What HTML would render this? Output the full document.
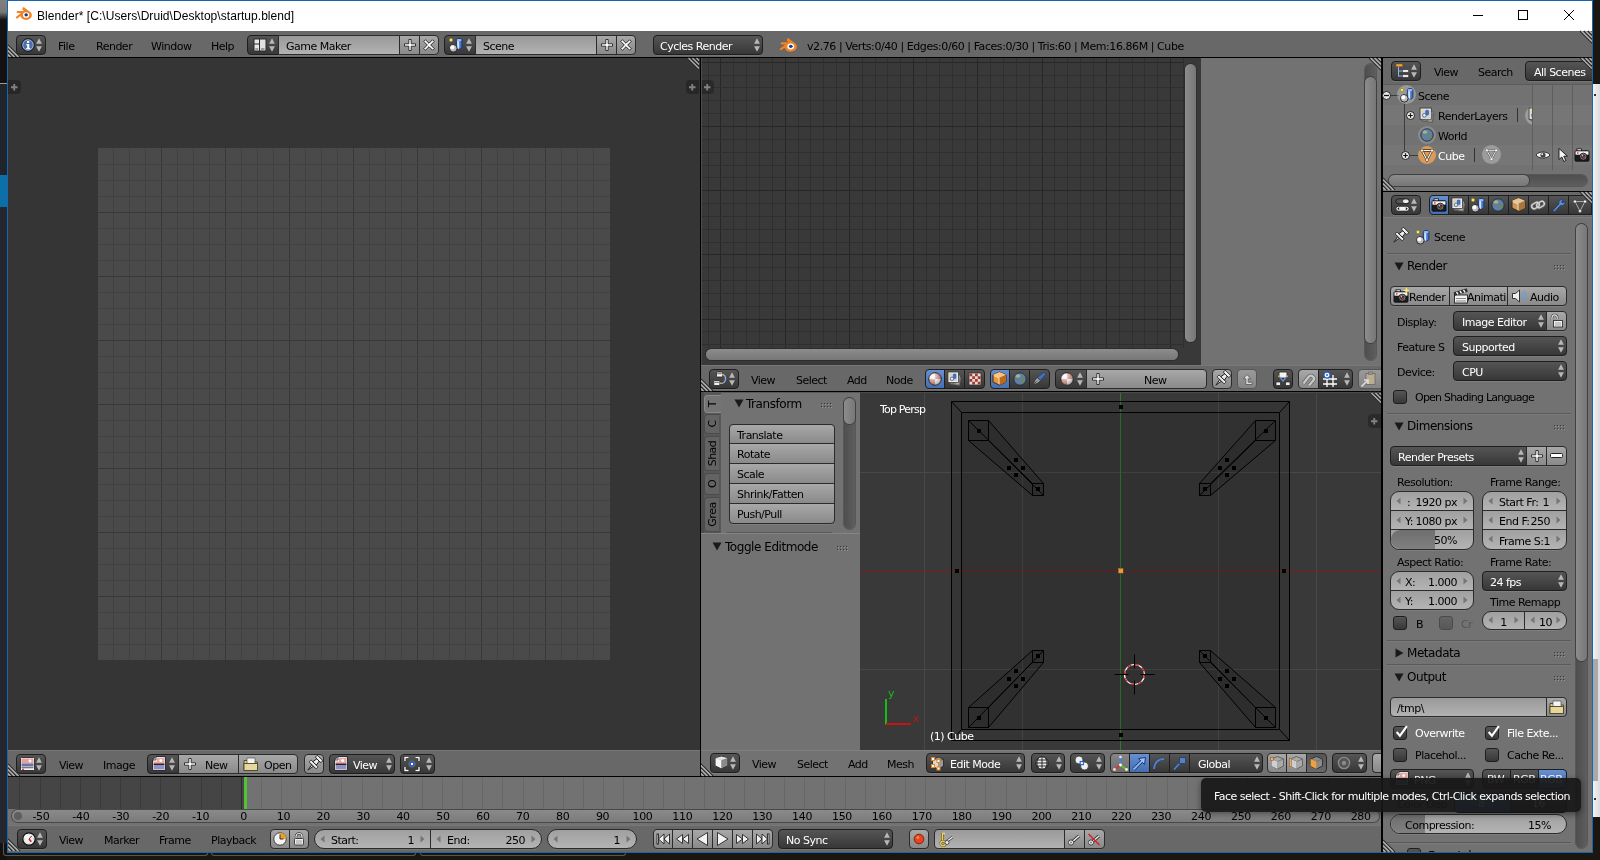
<!DOCTYPE html><html><head><meta charset="utf-8"><title>Blender</title><style>
*{box-sizing:border-box;margin:0;padding:0}
html,body{width:1600px;height:860px;overflow:hidden;background:#1a1610}
body{position:relative;font-family:"DejaVu Sans","Liberation Sans",sans-serif;font-size:11px;letter-spacing:-0.5px;color:#000;line-height:13px;white-space:nowrap}
.a{position:absolute}
.t{position:absolute;white-space:nowrap;line-height:13px;height:13px}
.w{color:#fff}
.pt{font-size:12px;letter-spacing:-0.45px;line-height:14px;height:14px}
.hd{position:absolute;background:#727272}
/* widgets */
.btn{position:absolute;border:1px solid #2b2b2b;background:linear-gradient(#a8a8a8,#8a8a8a);border-radius:4px}
.mnu{position:absolute;border:1px solid #1e1e1e;background:linear-gradient(#555,#373737);border-radius:4px;color:#fff}
.num{position:absolute;border:1px solid #2b2b2b;background:linear-gradient(#a0a0a0,#b4b4b4);border-radius:10px}
.txt{position:absolute;border:1px solid #2b2b2b;background:linear-gradient(#999,#b2b2b2);border-radius:4px}
.chk{position:absolute;border:1px solid #1e1e1e;background:linear-gradient(#555,#373737);border-radius:3px;width:14px;height:14px}
.rl{border-top-right-radius:0;border-bottom-right-radius:0}
.rr{border-top-left-radius:0;border-bottom-left-radius:0}
.rn{border-radius:0}
.rt{border-bottom-left-radius:0;border-bottom-right-radius:0}
.rb{border-top-left-radius:0;border-top-right-radius:0}
svg{position:absolute;overflow:visible}
</style></head><body><div class="a" style="left:0;top:0;width:1600px;height:860px;will-change:transform">
<div class="a" style="left:0px;top:0px;width:7px;height:84px;background:linear-gradient(#808080 0,#787878 12px,#141210 20px,#141210 100%);"></div>
<div class="a" style="left:0px;top:83px;width:7px;height:1px;background:#9a9a9a;"></div>
<div class="a" style="left:0px;top:84px;width:7px;height:91px;background:#20252b;"></div>
<div class="a" style="left:0px;top:175px;width:7px;height:32px;background:#0c6fa8;"></div>
<div class="a" style="left:0px;top:207px;width:7px;height:636px;background:#24282e;"></div>
<div class="a" style="left:0px;top:843px;width:7px;height:17px;background:#0c0c0c;"></div>
<div class="a" style="left:1593px;top:0px;width:7px;height:84px;background:#1a1712;"></div>
<div class="a" style="left:1593px;top:84px;width:7px;height:733px;background:linear-gradient(90deg,#f2f2f2,#dcdcdc);"></div>
<div class="a" style="left:1593px;top:659px;width:5px;height:122px;background:#a9a9a9;"></div>
<div class="a" style="left:1594px;top:94px;width:2px;height:2px;background:#333;"></div>
<div class="a" style="left:1594px;top:798px;width:2px;height:2px;background:#333;"></div>
<div class="a" style="left:1593px;top:817px;width:7px;height:43px;background:#1a1610;"></div>
<div class="a" style="left:7px;top:0px;width:1586px;height:853px;background:#727272;border:1px solid #1767b0"></div>
<div class="a" style="left:8px;top:1px;width:1584px;height:30px;background:#fff;"></div>
<div class="a" style="left:8px;top:31px;width:1584px;height:26px;background:#686868;"></div>
<div class="a" style="left:8px;top:57px;width:1584px;height:1px;background:#000;"></div>
<div class="a" style="left:8px;top:58px;width:692px;height:692px;background:#353535;"></div>
<div class="a" style="left:700px;top:58px;width:1px;height:720px;background:#000;"></div>
<div class="a" style="left:8px;top:750px;width:692px;height:26px;background:#686868;"></div>
<div class="a" style="left:701px;top:58px;width:482px;height:307px;background:#393939;"></div>
<div class="a" style="left:1183px;top:58px;width:18px;height:307px;background:#393939;"></div>
<div class="a" style="left:1201px;top:58px;width:180px;height:307px;background:#727272;"></div>
<div class="a" style="left:701px;top:365px;width:680px;height:26px;background:#686868;"></div>
<div class="a" style="left:701px;top:391px;width:680px;height:1px;background:#000;"></div>
<div class="a" style="left:701px;top:392px;width:159px;height:358px;background:#727272;"></div>
<div class="a" style="left:860px;top:392px;width:521px;height:358px;background:#393939;"></div>
<div class="a" style="left:701px;top:750px;width:680px;height:26px;background:#727272;"></div>
<div class="a" style="left:8px;top:776px;width:1373px;height:1px;background:#000;"></div>
<div class="a" style="left:8px;top:777px;width:1373px;height:48px;background:#727272;"></div>
<div class="a" style="left:8px;top:825px;width:1373px;height:27px;background:#686868;"></div>
<div class="a" style="left:1381px;top:58px;width:2px;height:794px;background:#000;"></div>
<div class="a" style="left:1383px;top:58px;width:209px;height:133px;background:#727272;"></div>
<div class="a" style="left:1383px;top:58px;width:209px;height:26px;background:#686868;"></div>
<div class="a" style="left:1383px;top:191px;width:209px;height:1px;background:#000;"></div>
<div class="a" style="left:1383px;top:192px;width:209px;height:660px;background:#727272;"></div>
<div class="a" style="left:1383px;top:192px;width:209px;height:26px;background:#686868;"></div>
<div class="a" style="left:1383px;top:217px;width:209px;height:1px;background:#7c7c7c;"></div>
<svg class="a" style="left:16px;top:7px" width="16" height="13.12" viewBox="0 0 32 26"><path d="M13.5 1.2c1-.9 2.600-.9 3.600 0l12 9.400c2.200 2 3 4.500 2.400 7.300-1 4.600-5.600 7.800-11.400 7.800-5.700 0-10.300-3.300-11.300-7.600l-5.400 4.100c-1.300 1-2.900.8-3.500-.2-.6-1 0-2.200 1-3l9.100-7H3.800c-1.500 0-2.500-.9-2.500-2 0-1.200 1-2.100 2.500-2.100h12.100l-2.400-2c-1.100-.9-1.100-2.100 0-3z" fill="#f5821f"/><ellipse cx="20.200" cy="15.800" rx="6.400" ry="5.600" fill="#fff"/><ellipse cx="20.400" cy="15.600" rx="3.500" ry="3.200" fill="#0b3d91"/></svg>
<div class="t" style="left:37px;top:9px;font:12px/14px 'Liberation Sans',sans-serif;letter-spacing:0.05px;height:14px;color:#000">Blender* [C:\Users\Druid\Desktop\startup.blend]</div>
<svg class="a" style="left:1460px;top:1px" width="132" height="30" viewBox="0 0 132 30" fill="none" stroke="#000" stroke-width="1"><path d="M13 14.500h10"/><rect x="58.500" y="9.500" width="9" height="9"/><path d="M104 9l10 10M114 9l-10 10"/></svg>
<div class="mnu " style="left:16px;top:35px;width:30px;height:20px;"></div>
<svg class="a" style="left:35px;top:38px" width="8" height="14" viewBox="0 0 8 14"><path d="M4 0.300 L6.900 5.700 L1.100 5.700 Z M1.100 8.300 L6.900 8.300 L4 13.700 Z" fill="#b8b8b8"/></svg>
<svg class="a" style="left:21px;top:38px" width="14" height="14" viewBox="0 0 14 14"><circle cx="7" cy="7" r="6.300" fill="#4a6ea6" stroke="#111" stroke-width="1"/><circle cx="7" cy="7" r="5.200" fill="none" stroke="#a9c0e6" stroke-width="0.8"/><path d="M6 3h2.200v2H6zM5.300 6h3v4h1v1.200H5.200V10h1V7.200h-.9z" fill="#fff"/></svg>
<div class="a" style="left:18px;top:55px;width:26px;height:1px;background:rgba(255,255,255,0.09);"></div>
<div class="t " style="left:58px;top:40px;">File</div>
<div class="t " style="left:96px;top:40px;">Render</div>
<div class="t " style="left:151px;top:40px;">Window</div>
<div class="t " style="left:211px;top:40px;">Help</div>
<svg class="a" style="left:8px;top:45px" width="12" height="12" viewBox="0 0 12 12"><g fill="none"><path d="M0 0 L12 12 M0 4 L8 12 M0 8 L4 12" stroke="#2c2c2c" stroke-width="1.3"/><path d="M0 1.5 L10.5 12 M0 5.5 L6.5 12 M0 9.5 L2.5 12" stroke="#b4b4b4" stroke-width="1.1"/></g></svg>
<div class="mnu rl" style="left:247px;top:35px;width:32px;height:20px;"></div>
<svg class="a" style="left:268px;top:38px" width="8" height="14" viewBox="0 0 8 14"><path d="M4 0.300 L6.900 5.700 L1.100 5.700 Z M1.100 8.300 L6.900 8.300 L4 13.700 Z" fill="#b8b8b8"/></svg>
<svg class="a" style="left:253px;top:38px" width="14" height="14" viewBox="0 0 14 14"><rect x=".5" y=".5" width="13" height="13" rx="1" fill="#2a2a2a"/><rect x="1.500" y="1.500" width="4.500" height="4" fill="#e8e8e8"/><rect x="1.500" y="6.500" width="4.500" height="6" fill="#e8e8e8"/><rect x="7" y="1.500" width="5.500" height="11" fill="#e0e0e0"/><rect x="2.200" y="10.500" width="3" height="1" fill="#555"/><rect x="8" y="10.500" width="3.500" height="1" fill="#555"/></svg>
<div class="btn rn" style="left:278px;top:35px;width:122px;height:20px;background:linear-gradient(#999,#b2b2b2)"><div class="t" style="left:7px;top:4px">Game Maker</div></div>
<div class="btn rn" style="left:399px;top:35px;width:21px;height:20px;"><svg class="a" style="left:2.5px;top:2px" width="14" height="14" viewBox="0 0 14 14"><path d="M5.800 1.500h2.400v4.300h4.300v2.400H8.200v4.300H5.800V8.200H1.500V5.800h4.300z" fill="#fff" stroke="#222" stroke-width=".9"/></svg></div>
<div class="btn rr" style="left:419px;top:35px;width:20px;height:20px;"><svg class="a" style="left:2px;top:2px" width="14" height="14" viewBox="0 0 14 14"><path d="M5.800 .8h2.400v5h5v2.400h-5v5H5.800v-5h-5V5.800h5z" transform="rotate(45 7 7)" fill="#fff" stroke="#222" stroke-width=".9"/></svg></div>
<div class="a" style="left:250px;top:55px;width:186px;height:1px;background:rgba(255,255,255,0.09);"></div>
<div class="mnu rl" style="left:444px;top:35px;width:32px;height:20px;"></div>
<svg class="a" style="left:465px;top:38px" width="8" height="14" viewBox="0 0 8 14"><path d="M4 0.300 L6.900 5.700 L1.100 5.700 Z M1.100 8.300 L6.900 8.300 L4 13.700 Z" fill="#b8b8b8"/></svg>
<svg class="a" style="left:448px;top:37px" width="16" height="16" viewBox="0 0 16 16"><path d="M8.300 3.200c0-2.300 5.600-2.300 5.600 0v7c0 2.300-5.600 2.300-5.600 0z" fill="#3f78d4" stroke="#1a2f5a" stroke-width=".8"/><path d="M9.200 3.600c.5.500 1.300.7 2 .7v7.800c-.8 0-1.500-.3-2-.8z" fill="#d5e4fb"/><ellipse cx="11.100" cy="3.100" rx="2.500" ry="1.100" fill="#9fc0f2"/><circle cx="5.300" cy="11.300" r="3.800" fill="#bdbdbd" stroke="#222" stroke-width=".9"/><circle cx="4.300" cy="10.200" r="2" fill="#fff"/><circle cx="3" cy="3" r="1.700" fill="#f6ea6e" stroke="#8d8420" stroke-width=".7"/></svg>
<div class="btn rn" style="left:475px;top:35px;width:122px;height:20px;background:linear-gradient(#999,#b2b2b2)"><div class="t" style="left:7px;top:4px">Scene</div></div>
<div class="btn rn" style="left:596px;top:35px;width:21px;height:20px;"><svg class="a" style="left:2.5px;top:2px" width="14" height="14" viewBox="0 0 14 14"><path d="M5.800 1.500h2.400v4.300h4.300v2.400H8.200v4.300H5.800V8.200H1.500V5.800h4.300z" fill="#fff" stroke="#222" stroke-width=".9"/></svg></div>
<div class="btn rr" style="left:616px;top:35px;width:20px;height:20px;"><svg class="a" style="left:2px;top:2px" width="14" height="14" viewBox="0 0 14 14"><path d="M5.800 .8h2.400v5h5v2.400h-5v5H5.800v-5h-5V5.800h5z" transform="rotate(45 7 7)" fill="#fff" stroke="#222" stroke-width=".9"/></svg></div>
<div class="a" style="left:447px;top:55px;width:186px;height:1px;background:rgba(255,255,255,0.09);"></div>
<div class="mnu " style="left:653px;top:35px;width:110px;height:20px;"><div class="t w" style="left:6px;top:4px">Cycles Render</div><svg class="a" style="left:98.5px;top:2.0px" width="8" height="14" viewBox="0 0 8 14"><path d="M4 0.300 L6.900 5.700 L1.100 5.700 Z M1.100 8.300 L6.900 8.300 L4 13.700 Z" fill="#b8b8b8"/></svg></div>
<div class="a" style="left:656px;top:55px;width:104px;height:1px;background:rgba(255,255,255,0.09);"></div>
<svg class="a" style="left:780px;top:38px" width="17" height="13.94" viewBox="0 0 32 26"><path d="M13.5 1.2c1-.9 2.600-.9 3.600 0l12 9.400c2.200 2 3 4.500 2.400 7.300-1 4.600-5.600 7.800-11.400 7.800-5.700 0-10.300-3.300-11.300-7.600l-5.400 4.100c-1.300 1-2.900.8-3.500-.2-.6-1 0-2.200 1-3l9.100-7H3.800c-1.500 0-2.500-.9-2.500-2 0-1.200 1-2.100 2.500-2.100h12.100l-2.400-2c-1.100-.9-1.100-2.100 0-3z" fill="#f5821f"/><ellipse cx="20.200" cy="15.800" rx="6.400" ry="5.600" fill="#fff"/><ellipse cx="20.400" cy="15.600" rx="3.500" ry="3.200" fill="#0b3d91"/></svg>
<div class="t " style="left:807px;top:40px;letter-spacing:-0.43px">v2.76 | Verts:0/40 | Edges:0/60 | Faces:0/30 | Tris:60 | Mem:16.86M | Cube</div>
<svg class="a" style="left:1580px;top:31px" width="12" height="12" viewBox="0 0 12 12"><g fill="none"><path d="M0 0 L12 12 M4 0 L12 8 M8 0 L12 4" stroke="#2c2c2c" stroke-width="1.3"/><path d="M1.5 0 L12 10.5 M5.5 0 L12 6.5 M9.5 0 L12 2.5" stroke="#b4b4b4" stroke-width="1.1"/></g></svg>
<div class="a" style="left:98px;top:148px;width:512px;height:512px;background-color:#4a4a4a;background-image:linear-gradient(90deg,transparent 63px,#383838 63px),linear-gradient(90deg,transparent 15px,#414141 15px);background-size:64px 64px,16px 16px"></div>
<div class="a" style="left:609px;top:148px;width:1px;height:512px;background:#4a4a4a;"></div>
<div class="a" style="left:98px;top:149px;width:512px;height:511px;background-image:linear-gradient(transparent 63px,#383838 63px),linear-gradient(transparent 15px,#414141 15px);background-size:64px 64px,16px 16px"></div>
<div class="a" style="left:8px;top:80px;width:13px;height:14px;background:rgba(0,0,0,.25);border-radius:0 4px 4px 0"><svg class="a" style="left:3px;top:4px" width="6.500" height="6.500" viewBox="0 0 7 7"><path d="M2.500 0h2v2.500H7v2H4.500V7h-2V4.500H0v-2h2.500z" fill="#828282"/></svg></div>
<div class="a" style="left:686px;top:80px;width:13px;height:14px;background:rgba(0,0,0,.25);border-radius:4px 0 0 4px"><svg class="a" style="left:3px;top:4px" width="6.500" height="6.500" viewBox="0 0 7 7"><path d="M2.500 0h2v2.500H7v2H4.500V7h-2V4.500H0v-2h2.500z" fill="#828282"/></svg></div>
<svg class="a" style="left:687px;top:58px" width="12" height="12" viewBox="0 0 12 12"><g fill="none"><path d="M0 0 L12 12 M4 0 L12 8 M8 0 L12 4" stroke="#2c2c2c" stroke-width="1.3"/><path d="M1.5 0 L12 10.5 M5.5 0 L12 6.5 M9.5 0 L12 2.5" stroke="#b4b4b4" stroke-width="1.1"/></g></svg>
<div class="mnu " style="left:16px;top:754px;width:30px;height:20px;"></div>
<svg class="a" style="left:35px;top:757px" width="8" height="14" viewBox="0 0 8 14"><path d="M4 0.300 L6.900 5.700 L1.100 5.700 Z M1.100 8.300 L6.900 8.300 L4 13.700 Z" fill="#b8b8b8"/></svg>
<svg class="a" style="left:20px;top:757px" width="15" height="14" viewBox="0 0 15 14"><rect x=".5" y=".5" width="14" height="13" rx="1" fill="#f4f4f4" stroke="#2a2a2a" stroke-width=".9"/><rect x="1.500" y="1.500" width="12" height="5" fill="#e8a09c"/><rect x="1.500" y="6.500" width="12" height="3" fill="#6d72ab"/><circle cx="10" cy="4" r="1.400" fill="#fff"/><rect x="1.500" y="10.300" width="12" height=".9" fill="#444"/><rect x="2" y="11.800" width="2" height="1" fill="#d22"/></svg>
<div class="a" style="left:18px;top:774px;width:26px;height:1px;background:rgba(255,255,255,0.09);"></div>
<div class="t " style="left:59px;top:759px;">View</div>
<div class="t " style="left:103px;top:759px;">Image</div>
<div class="mnu rl" style="left:147px;top:754px;width:32px;height:20px;"></div>
<svg class="a" style="left:168px;top:757px" width="8" height="14" viewBox="0 0 8 14"><path d="M4 0.300 L6.900 5.700 L1.100 5.700 Z M1.100 8.300 L6.900 8.300 L4 13.700 Z" fill="#b8b8b8"/></svg>
<svg class="a" style="left:152px;top:756px" width="14.0" height="15" viewBox="0 0 14 15"><path d="M4 .6h9.400v13.800H.6V4z" fill="#f6f6f6" stroke="#222" stroke-width="1"/><path d="M5 2h7.300v6H1.700V5.500H5z" fill="#eaa6a2"/><rect x="1.700" y="8" width="10.600" height="5.300" fill="#8f90c6"/><rect x="1.700" y="7.600" width="10.600" height="1.300" fill="#1a1a1a"/><circle cx="8.700" cy="4.600" r="1.500" fill="#fff"/><path d="M.6 4L4 .6V4z" fill="#ddd" stroke="#222" stroke-width=".7"/></svg>
<div class="btn rn" style="left:178px;top:754px;width:61px;height:20px;"><div class="t" style="left:26px;top:4px">New</div><svg class="a" style="left:4px;top:2px" width="14" height="14" viewBox="0 0 14 14"><path d="M5.800 1.500h2.400v4.300h4.300v2.400H8.200v4.300H5.800V8.200H1.500V5.800h4.300z" fill="#fff" stroke="#222" stroke-width=".9"/></svg></div>
<div class="btn rr" style="left:238px;top:754px;width:60px;height:20px;"><div class="t" style="left:25px;top:4px">Open</div><svg class="a" style="left:4px;top:2px" width="16" height="14" viewBox="0 0 16 14"><path d="M1 3.500h5l1 1.500h7.500v8.500H1z" fill="#d9c98a" stroke="#4a4223" stroke-width=".9"/><path d="M4 1h8v6H4z" fill="#f4f4f4" stroke="#555" stroke-width=".7"/><path d="M1 6.500h13.500v7H1z" fill="#e6d89c" stroke="#4a4223" stroke-width=".9"/></svg></div>
<div class="a" style="left:151px;top:774px;width:144px;height:1px;background:rgba(255,255,255,0.09);"></div>
<div class="btn " style="left:304px;top:754px;width:20px;height:20px;"><svg class="a" style="left:1px;top:1px" width="16" height="16" viewBox="0 0 16 16"><g transform="translate(0.600 -0.600) rotate(45 8 8)" fill="#ececec" stroke="#1c1c1c" stroke-width=".9" stroke-linejoin="round"><path d="M8 17.500L6.800 10.500h2.400z" fill="#d8d8d8"/><rect x="3" y="8" width="10" height="2.800" rx=".8"/><path d="M5.600 8L6.300 3h3.400l.7 5z"/><rect x="4" y=".2" width="8" height="3" rx="1.100"/></g></svg></div>
<div class="a" style="left:306px;top:774px;width:16px;height:1px;background:rgba(255,255,255,0.09);"></div>
<div class="mnu " style="left:329px;top:754px;width:66px;height:20px;"><div class="t w" style="left:23px;top:4px">View</div><svg class="a" style="left:54.5px;top:2.0px" width="8" height="14" viewBox="0 0 8 14"><path d="M4 0.300 L6.900 5.700 L1.100 5.700 Z M1.100 8.300 L6.900 8.300 L4 13.700 Z" fill="#b8b8b8"/></svg></div>
<svg class="a" style="left:334px;top:756px" width="14.0" height="15" viewBox="0 0 14 15"><path d="M4 .6h9.400v13.800H.6V4z" fill="#f6f6f6" stroke="#222" stroke-width="1"/><path d="M5 2h7.300v6H1.700V5.500H5z" fill="#eaa6a2"/><rect x="1.700" y="8" width="10.600" height="5.300" fill="#8f90c6"/><rect x="1.700" y="7.600" width="10.600" height="1.300" fill="#1a1a1a"/><circle cx="8.700" cy="4.600" r="1.500" fill="#fff"/><path d="M.6 4L4 .6V4z" fill="#ddd" stroke="#222" stroke-width=".7"/></svg>
<div class="a" style="left:332px;top:774px;width:60px;height:1px;background:rgba(255,255,255,0.09);"></div>
<div class="mnu " style="left:400px;top:754px;width:35px;height:20px;"><svg class="a" style="left:23.5px;top:2.0px" width="8" height="14" viewBox="0 0 8 14"><path d="M4 0.300 L6.900 5.700 L1.100 5.700 Z M1.100 8.300 L6.900 8.300 L4 13.700 Z" fill="#b8b8b8"/></svg></div>
<svg class="a" style="left:404px;top:756px" width="16" height="16" viewBox="0 0 16 16" fill="none"><path d="M1 5V1.500h3.500M11.500 1.500H15V5M15 11v3.500h-3.500M4.500 14.500H1V11" stroke="#111" stroke-width="2.600"/><path d="M1 5V1.500h3.500M11.500 1.500H15V5M15 11v3.500h-3.500M4.500 14.500H1V11" stroke="#fff" stroke-width="1.400"/><circle cx="8" cy="8" r="3.600" fill="#6a6a6a"/><rect x="6.300" y="6.300" width="3.400" height="3.400" fill="#fff" stroke="#2058d0" stroke-width="1.300"/></svg>
<div class="a" style="left:404px;top:774px;width:28px;height:1px;background:rgba(255,255,255,0.09);"></div>
<svg class="a" style="left:8px;top:764px" width="12" height="12" viewBox="0 0 12 12"><g fill="none"><path d="M0 0 L12 12 M0 4 L8 12 M0 8 L4 12" stroke="#2c2c2c" stroke-width="1.3"/><path d="M0 1.5 L10.5 12 M0 5.5 L6.5 12 M0 9.5 L2.5 12" stroke="#b4b4b4" stroke-width="1.1"/></g></svg>
<div class="a" style="left:8px;top:750px;width:692px;height:1px;background:rgba(255,255,255,0.10);"></div>
<svg class="a" style="left:701px;top:58px" width="483" height="307" viewBox="0 0 483 307" shape-rendering="crispEdges"><rect x="7" y="0" width="1" height="307" fill="#2f2f2f"/><rect x="19" y="0" width="1" height="307" fill="#272727"/><rect x="32" y="0" width="1" height="307" fill="#2f2f2f"/><rect x="45" y="0" width="1" height="307" fill="#2f2f2f"/><rect x="58" y="0" width="1" height="307" fill="#2f2f2f"/><rect x="71" y="0" width="1" height="307" fill="#2f2f2f"/><rect x="84" y="0" width="1" height="307" fill="#272727"/><rect x="97" y="0" width="1" height="307" fill="#2f2f2f"/><rect x="109" y="0" width="1" height="307" fill="#2f2f2f"/><rect x="122" y="0" width="1" height="307" fill="#2f2f2f"/><rect x="135" y="0" width="1" height="307" fill="#2f2f2f"/><rect x="148" y="0" width="1" height="307" fill="#272727"/><rect x="161" y="0" width="1" height="307" fill="#2f2f2f"/><rect x="174" y="0" width="1" height="307" fill="#2f2f2f"/><rect x="186" y="0" width="1" height="307" fill="#2f2f2f"/><rect x="199" y="0" width="1" height="307" fill="#2f2f2f"/><rect x="212" y="0" width="1" height="307" fill="#272727"/><rect x="225" y="0" width="1" height="307" fill="#2f2f2f"/><rect x="238" y="0" width="1" height="307" fill="#2f2f2f"/><rect x="251" y="0" width="1" height="307" fill="#2f2f2f"/><rect x="264" y="0" width="1" height="307" fill="#2f2f2f"/><rect x="276" y="0" width="1" height="307" fill="#272727"/><rect x="289" y="0" width="1" height="307" fill="#2f2f2f"/><rect x="302" y="0" width="1" height="307" fill="#2f2f2f"/><rect x="315" y="0" width="1" height="307" fill="#2f2f2f"/><rect x="328" y="0" width="1" height="307" fill="#2f2f2f"/><rect x="341" y="0" width="1" height="307" fill="#272727"/><rect x="353" y="0" width="1" height="307" fill="#2f2f2f"/><rect x="366" y="0" width="1" height="307" fill="#2f2f2f"/><rect x="379" y="0" width="1" height="307" fill="#2f2f2f"/><rect x="392" y="0" width="1" height="307" fill="#2f2f2f"/><rect x="405" y="0" width="1" height="307" fill="#272727"/><rect x="418" y="0" width="1" height="307" fill="#2f2f2f"/><rect x="431" y="0" width="1" height="307" fill="#2f2f2f"/><rect x="443" y="0" width="1" height="307" fill="#2f2f2f"/><rect x="456" y="0" width="1" height="307" fill="#2f2f2f"/><rect x="469" y="0" width="1" height="307" fill="#272727"/><rect x="482" y="0" width="1" height="307" fill="#2f2f2f"/><rect x="0" y="4" width="483" height="1" fill="#272727"/><rect x="0" y="17" width="483" height="1" fill="#2f2f2f"/><rect x="0" y="29" width="483" height="1" fill="#2f2f2f"/><rect x="0" y="42" width="483" height="1" fill="#2f2f2f"/><rect x="0" y="55" width="483" height="1" fill="#2f2f2f"/><rect x="0" y="68" width="483" height="1" fill="#272727"/><rect x="0" y="81" width="483" height="1" fill="#2f2f2f"/><rect x="0" y="94" width="483" height="1" fill="#2f2f2f"/><rect x="0" y="107" width="483" height="1" fill="#2f2f2f"/><rect x="0" y="119" width="483" height="1" fill="#2f2f2f"/><rect x="0" y="132" width="483" height="1" fill="#272727"/><rect x="0" y="145" width="483" height="1" fill="#2f2f2f"/><rect x="0" y="158" width="483" height="1" fill="#2f2f2f"/><rect x="0" y="171" width="483" height="1" fill="#2f2f2f"/><rect x="0" y="184" width="483" height="1" fill="#2f2f2f"/><rect x="0" y="196" width="483" height="1" fill="#272727"/><rect x="0" y="209" width="483" height="1" fill="#2f2f2f"/><rect x="0" y="222" width="483" height="1" fill="#2f2f2f"/><rect x="0" y="235" width="483" height="1" fill="#2f2f2f"/><rect x="0" y="248" width="483" height="1" fill="#2f2f2f"/><rect x="0" y="261" width="483" height="1" fill="#272727"/><rect x="0" y="273" width="483" height="1" fill="#2f2f2f"/><rect x="0" y="286" width="483" height="1" fill="#2f2f2f"/><rect x="0" y="299" width="483" height="1" fill="#2f2f2f"/></svg>
<div class="a" style="left:1184px;top:58px;width:17px;height:307px;background:#393939;"></div>
<div class="a" style="left:701px;top:348px;width:500px;height:17px;background:#393939;"></div>
<div class="a" style="left:701px;top:80px;width:13px;height:14px;background:rgba(0,0,0,.25);border-radius:0 4px 4px 0"><svg class="a" style="left:3px;top:4px" width="6.500" height="6.500" viewBox="0 0 7 7"><path d="M2.500 0h2v2.500H7v2H4.500V7h-2V4.500H0v-2h2.500z" fill="#828282"/></svg></div>
<div class="a" style="left:701px;top:58px;width:1px;height:307px;background:#4c4c4c;"></div>
<div class="a" style="left:1185px;top:64px;width:11px;height:278px;border-radius:5.5px;background:linear-gradient(90deg,#4e4e4e,#5e5e5e);box-shadow:0 0 0 1px rgba(40,40,40,.35)"></div>
<div class="a" style="left:1185px;top:64px;width:11px;height:278px;border-radius:5.5px;background:linear-gradient(90deg,#8c8c8c,#777);box-shadow:0 0 0 1px rgba(40,40,40,.5)"></div>
<div class="a" style="left:706px;top:349px;width:472px;height:11px;border-radius:5.5px;background:linear-gradient(#4e4e4e,#5e5e5e);box-shadow:0 0 0 1px rgba(40,40,40,.35)"></div>
<div class="a" style="left:706px;top:349px;width:472px;height:11px;border-radius:5.5px;background:linear-gradient(#8c8c8c,#777);box-shadow:0 0 0 1px rgba(40,40,40,.5)"></div>
<div class="a" style="left:1365px;top:64px;width:11px;height:296px;border-radius:5.5px;background:linear-gradient(90deg,#4e4e4e,#5e5e5e);box-shadow:0 0 0 1px rgba(40,40,40,.35)"></div>
<div class="a" style="left:1365px;top:77px;width:11px;height:266px;border-radius:5.5px;background:linear-gradient(90deg,#8c8c8c,#777);box-shadow:0 0 0 1px rgba(40,40,40,.5)"></div>
<svg class="a" style="left:1369px;top:58px" width="12" height="12" viewBox="0 0 12 12"><g fill="none"><path d="M0 0 L12 12 M4 0 L12 8 M8 0 L12 4" stroke="#2c2c2c" stroke-width="1.3"/><path d="M1.5 0 L12 10.5 M5.5 0 L12 6.5 M9.5 0 L12 2.5" stroke="#b4b4b4" stroke-width="1.1"/></g></svg>
<div class="a" style="left:702px;top:365px;width:679px;height:1px;background:rgba(255,255,255,0.10);"></div>
<div class="mnu " style="left:709px;top:369px;width:30px;height:20px;"></div>
<svg class="a" style="left:728px;top:372px" width="8" height="14" viewBox="0 0 8 14"><path d="M4 0.300 L6.900 5.700 L1.100 5.700 Z M1.100 8.300 L6.900 8.300 L4 13.700 Z" fill="#b8b8b8"/></svg>
<svg class="a" style="left:713px;top:371px" width="16" height="16" viewBox="0 0 16 16"><path d="M9 3.500c5 0 5 9-1.500 9" fill="none" stroke="#8fb3ee" stroke-width="1.300"/><rect x="3.500" y="1" width="6" height="5" rx=".8" fill="#f2f2f2" stroke="#222" stroke-width=".8"/><rect x="4.300" y="2.300" width="4.400" height=".9" fill="#555"/><rect x=".8" y="9.500" width="6" height="5" rx=".8" fill="#f2f2f2" stroke="#222" stroke-width=".8"/><rect x="1.600" y="10.800" width="4.400" height=".9" fill="#555"/><rect x="9" y="2.800" width="1.600" height="1.600" fill="#f0a020"/><rect x="6.500" y="11.400" width="1.600" height="1.600" fill="#f0a020"/></svg>
<div class="a" style="left:711px;top:389px;width:26px;height:1px;background:rgba(255,255,255,0.09);"></div>
<div class="t " style="left:751px;top:374px;">View</div>
<div class="t " style="left:796px;top:374px;">Select</div>
<div class="t " style="left:847px;top:374px;">Add</div>
<div class="t " style="left:886px;top:374px;">Node</div>
<div class="mnu rl" style="left:925px;top:369px;width:20px;height:20px;background:linear-gradient(#6690d2,#466eb2)"><svg class="a" style="left:2px;top:2px" width="14" height="14" viewBox="0 0 14 14"><defs><radialGradient id="mg" cx=".35" cy=".3" r=".8"><stop offset="0" stop-color="#fff" stop-opacity=".95"/><stop offset=".45" stop-color="#fff" stop-opacity=".25"/><stop offset="1" stop-color="#000" stop-opacity=".35"/></radialGradient></defs><circle cx="7" cy="7" r="6.300" fill="#e4e0e0"/><path d="M7 7V.7A6.300 6.300 0 0 1 13.300 7z" fill="#c47f74"/><path d="M7 7v6.300A6.300 6.300 0 0 1 .7 7z" fill="#c47f74"/><circle cx="7" cy="7" r="6.300" fill="url(#mg)"/><circle cx="7" cy="7" r="6.300" fill="none" stroke="#1a1a1a" stroke-width=".9"/></svg></div>
<div class="mnu rn" style="left:944px;top:369px;width:21px;height:20px;background:linear-gradient(#555,#373737)"><svg class="a" style="left:2px;top:1px" width="15" height="15" viewBox="0 0 15 15"><path d="M4 5l10 1.500-1.500 8L3 13z" fill="#d8d2b4" stroke="#444" stroke-width=".7"/><path d="M3 3.500l10 .8-.8 9L2.200 12z" fill="#e8e4d0" stroke="#444" stroke-width=".7"/><rect x="1" y="1" width="10.500" height="10.500" fill="#f6f6f6" stroke="#333" stroke-width=".8"/><rect x="2.200" y="2.200" width="8.100" height="8.100" fill="#c9d3e6"/><rect x="6.300" y="3" width="2.600" height="4.600" rx="1" fill="#3f76cf" stroke="#1d3f7a" stroke-width=".5"/><circle cx="5" cy="7.800" r="1.700" fill="#eee" stroke="#333" stroke-width=".6"/><circle cx="3.300" cy="3.300" r="1" fill="#f1de52"/></svg></div>
<div class="mnu rr" style="left:964px;top:369px;width:21px;height:20px;background:linear-gradient(#555,#373737)"><svg class="a" style="left:3px;top:2px" width="14" height="14" viewBox="0 0 14 14"><rect x="1" y="1" width="12" height="12" fill="#e6dcd6" stroke="#333" stroke-width=".8"/><rect x="1.5" y="1.5" width="2.750" height="2.750" fill="#a23a32"/><rect x="1.5" y="7.0" width="2.750" height="2.750" fill="#a23a32"/><rect x="4.25" y="4.25" width="2.750" height="2.750" fill="#a23a32"/><rect x="4.25" y="9.75" width="2.750" height="2.750" fill="#a23a32"/><rect x="7.0" y="1.5" width="2.750" height="2.750" fill="#a23a32"/><rect x="7.0" y="7.0" width="2.750" height="2.750" fill="#a23a32"/><rect x="9.75" y="4.25" width="2.750" height="2.750" fill="#a23a32"/><rect x="9.75" y="9.75" width="2.750" height="2.750" fill="#a23a32"/></svg></div>
<div class="a" style="left:928px;top:389px;width:54px;height:1px;background:rgba(255,255,255,0.09);"></div>
<div class="mnu rl" style="left:990px;top:369px;width:20px;height:20px;background:linear-gradient(#6690d2,#466eb2)"><svg class="a" style="left:1px;top:1px" width="15" height="15" viewBox="0 0 15 15"><path d="M7.500 1L14 3.800V11L7.500 14.200 1 11V3.800z" fill="#e8943a" stroke="#3a2408" stroke-width=".9"/><path d="M7.500 1L14 3.800 7.500 6.800 1 3.800z" fill="#f7c67e"/><path d="M7.500 6.800L14 3.800V11L7.500 14.200z" fill="#b96a1c"/><path d="M1.800 4.600L7 7v6.200" fill="none" stroke="#fff" stroke-width=".8" opacity=".8"/></svg></div>
<div class="mnu rn" style="left:1009px;top:369px;width:21px;height:20px;background:linear-gradient(#555,#373737)"><svg class="a" style="left:3px;top:2px" width="14" height="14" viewBox="0 0 14 14"><circle cx="7" cy="7" r="6.200" fill="#5f7fa6" stroke="#1c2a3c" stroke-width=".9"/><path d="M3 3.500c1.500-1 3-.8 3.800.2.600 1-.3 1.800-1.200 2.300-.8.600-.5 1.800-1.600 1.700C2.800 7.500 2 5 3 3.500zM8 6.500c1.200-.6 3-.4 3.600.8.500 1.200-.5 3-1.700 3.700-1 .4-1.400-.9-1.600-1.900-.2-1-1.200-2-.3-2.600zM7.500 2c.8-.4 2-.2 2.600.5-.7.600-1.800.6-2.600-.5z" fill="#6f8656"/><ellipse cx="5" cy="4" rx="2.500" ry="1.700" fill="#fff" opacity=".35"/></svg></div>
<div class="mnu rr" style="left:1029px;top:369px;width:21px;height:20px;background:linear-gradient(#555,#373737)"><svg class="a" style="left:2px;top:1px" width="15" height="15" viewBox="0 0 15 15"><path d="M1 14l2-5 2.500-2.500 3 3L6 12z" fill="#9a9a9a" stroke="#333" stroke-width=".7"/><path d="M5.500 6.500L12 1l2 2.200L8.500 9.500z" fill="#4571b8" stroke="#1f355d" stroke-width=".7"/><path d="M1 14l3.500-3.500" stroke="#333" stroke-width=".7"/></svg></div>
<div class="a" style="left:993px;top:389px;width:54px;height:1px;background:rgba(255,255,255,0.09);"></div>
<div class="mnu rl" style="left:1055px;top:369px;width:32px;height:20px;"></div>
<svg class="a" style="left:1076px;top:372px" width="8" height="14" viewBox="0 0 8 14"><path d="M4 0.300 L6.900 5.700 L1.100 5.700 Z M1.100 8.300 L6.900 8.300 L4 13.700 Z" fill="#b8b8b8"/></svg>
<svg class="a" style="left:1060px;top:372px" width="14" height="14" viewBox="0 0 14 14"><defs><radialGradient id="mg" cx=".35" cy=".3" r=".8"><stop offset="0" stop-color="#fff" stop-opacity=".95"/><stop offset=".45" stop-color="#fff" stop-opacity=".25"/><stop offset="1" stop-color="#000" stop-opacity=".35"/></radialGradient></defs><circle cx="7" cy="7" r="6.300" fill="#e4e0e0"/><path d="M7 7V.7A6.300 6.300 0 0 1 13.300 7z" fill="#c47f74"/><path d="M7 7v6.300A6.300 6.300 0 0 1 .7 7z" fill="#c47f74"/><circle cx="7" cy="7" r="6.300" fill="url(#mg)"/><circle cx="7" cy="7" r="6.300" fill="none" stroke="#1a1a1a" stroke-width=".9"/></svg>
<div class="btn rr" style="left:1086px;top:369px;width:121px;height:20px;"><div class="t" style="left:57px;top:4px">New</div><svg class="a" style="left:4px;top:2px" width="14" height="14" viewBox="0 0 14 14"><path d="M5.800 1.500h2.400v4.300h4.300v2.400H8.200v4.300H5.800V8.200H1.500V5.800h4.300z" fill="#fff" stroke="#222" stroke-width=".9"/></svg></div>
<div class="a" style="left:1058px;top:389px;width:146px;height:1px;background:rgba(255,255,255,0.09);"></div>
<div class="btn " style="left:1212px;top:369px;width:20px;height:20px;"><svg class="a" style="left:1px;top:1px" width="16" height="16" viewBox="0 0 16 16"><g transform="translate(0.600 -0.600) rotate(45 8 8)" fill="#ececec" stroke="#1c1c1c" stroke-width=".9" stroke-linejoin="round"><path d="M8 17.500L6.800 10.500h2.400z" fill="#d8d8d8"/><rect x="3" y="8" width="10" height="2.800" rx=".8"/><path d="M5.600 8L6.300 3h3.400l.7 5z"/><rect x="4" y=".2" width="8" height="3" rx="1.100"/></g></svg></div>
<div class="a" style="left:1214px;top:389px;width:16px;height:1px;background:rgba(255,255,255,0.09);"></div>
<div class="btn " style="left:1237px;top:369px;width:20px;height:20px;background:linear-gradient(#9a9a9a,#858585);border-color:#555"><svg class="a" style="left:2px;top:2px" width="14" height="14" viewBox="0 0 14 14"><path d="M3.200 6.800L7 2.500l3.800 4.300H8.200v3.400h4v2.300H5.800V6.800z" fill="#dcdcdc" stroke="#666" stroke-width="1"/></svg></div>
<div class="mnu " style="left:1273px;top:369px;width:20px;height:20px;"></div>
<svg class="a" style="left:1275px;top:371px" width="16" height="16" viewBox="0 0 16 16"><rect x="4" y="1" width="8" height="6" rx="1" fill="#f2f2f2" stroke="#222" stroke-width=".8"/><path d="M4 5l4 5 4-5" fill="none" stroke="#6b9cf0" stroke-width="1.200"/><rect x="1" y="11" width="4.500" height="3.500" fill="#f2f2f2" stroke="#222" stroke-width=".7"/><rect x="10.500" y="11" width="4.500" height="3.500" fill="#f2f2f2" stroke="#222" stroke-width=".7"/><rect x="3" y="4.500" width="1.500" height="1.500" fill="#f0a020"/><rect x="11.500" y="4.500" width="1.500" height="1.500" fill="#f0a020"/></svg>
<div class="a" style="left:1275px;top:389px;width:16px;height:1px;background:rgba(255,255,255,0.09);"></div>
<div class="btn rl" style="left:1298px;top:369px;width:21px;height:20px;"><svg class="a" style="left:2px;top:2px" width="15" height="15" viewBox="0 0 15 15"><path d="M2.500 11.500L7.500 5a3 3 0 0 1 4.800 3.600L8 13.500" fill="none" stroke="#6a6a6a" stroke-width="4"/><path d="M2.500 11.500L7.500 5a3 3 0 0 1 4.800 3.600L8 13.500" fill="none" stroke="#c8c8c8" stroke-width="2.200"/></svg></div>
<div class="mnu rr" style="left:1318px;top:369px;width:35px;height:20px;"><svg class="a" style="left:23.5px;top:2.0px" width="8" height="14" viewBox="0 0 8 14"><path d="M4 0.300 L6.900 5.700 L1.100 5.700 Z M1.100 8.300 L6.900 8.300 L4 13.700 Z" fill="#b8b8b8"/></svg></div>
<svg class="a" style="left:1322px;top:371px" width="16" height="16" viewBox="0 0 16 16"><path d="M1 8h14M1 13h14M5 4v12M11 4v12" stroke="#fff" stroke-width="1.300"/><circle cx="5" cy="4" r="3" fill="#fff" stroke="#2c5fc0" stroke-width="1.300"/><circle cx="5" cy="4" r="1" fill="#2c5fc0"/></svg>
<div class="a" style="left:1301px;top:389px;width:49px;height:1px;background:rgba(255,255,255,0.09);"></div>
<div class="btn rl" style="left:1358px;top:369px;width:21px;height:20px;background:linear-gradient(#9a9a9a,#858585);border-color:#555"><svg class="a" style="left:1px;top:1px" width="17" height="17" viewBox="0 0 17 17"><rect x="6" y="2.500" width="9" height="11" fill="#b9ae8e" stroke="#666" stroke-width=".8"/><rect x="8.500" y="1" width="4" height="2.500" fill="#999" stroke="#666" stroke-width=".6"/><path d="M1.500 15.500l6-6M4 9h4v4" fill="none" stroke="#ddd" stroke-width="1.600"/></svg></div>
<div class="a" style="left:1378px;top:369px;width:3px;height:20px;background:linear-gradient(#9a9a9a,#858585);border-top:1px solid #555;border-bottom:1px solid #555"></div>
<svg class="a" style="left:701px;top:379px" width="12" height="12" viewBox="0 0 12 12"><g fill="none"><path d="M0 0 L12 12 M0 4 L8 12 M0 8 L4 12" stroke="#2c2c2c" stroke-width="1.3"/><path d="M0 1.5 L10.5 12 M0 5.5 L6.5 12 M0 9.5 L2.5 12" stroke="#b4b4b4" stroke-width="1.1"/></g></svg>
<div class="a" style="left:701px;top:392px;width:159px;height:1px;background:#5a5a5a;"></div>
<div class="a" style="left:701px;top:392px;width:3px;height:141px;background:#4c4c4c;"></div>
<div class="a" style="left:704px;top:392px;width:17px;height:141px;background:#585858;"></div>
<div class="a" style="left:704px;top:395px;width:17px;height:18px;background:#747474;border:1px solid #8a8a8a;border-right:0;border-radius:4px 0 0 4px"><div class="t" style="left:1px;top:16px;width:16px;height:13px;text-align:center;transform-origin:0 0;transform:rotate(-90deg)">T</div></div>
<div class="a" style="left:704px;top:414px;width:16px;height:20px;background:#636363;border:1px solid #4b4b4b;border-right:1px solid #555;border-radius:4px 0 0 4px"><div class="t" style="left:1px;top:18px;width:18px;height:13px;text-align:center;transform-origin:0 0;transform:rotate(-90deg)">C</div></div>
<div class="a" style="left:704px;top:436px;width:16px;height:35px;background:#636363;border:1px solid #4b4b4b;border-right:1px solid #555;border-radius:4px 0 0 4px"><div class="t" style="left:1px;top:33px;width:33px;height:13px;text-align:center;transform-origin:0 0;transform:rotate(-90deg)">Shad</div></div>
<div class="a" style="left:704px;top:473px;width:16px;height:22px;background:#636363;border:1px solid #4b4b4b;border-right:1px solid #555;border-radius:4px 0 0 4px"><div class="t" style="left:1px;top:20px;width:20px;height:13px;text-align:center;transform-origin:0 0;transform:rotate(-90deg)">O</div></div>
<div class="a" style="left:704px;top:497px;width:16px;height:35px;background:#636363;border:1px solid #4b4b4b;border-right:1px solid #555;border-radius:4px 0 0 4px"><div class="t" style="left:1px;top:33px;width:33px;height:13px;text-align:center;transform-origin:0 0;transform:rotate(-90deg)">Grea</div></div>
<div class="a" style="left:720px;top:396px;width:1px;height:16px;background:#747474;"></div>
<svg class="a" style="left:734px;top:399px" width="10" height="9" viewBox="0 0 10 9"><path d="M.5 .5h9L5 8.500z" fill="#1a1a1a"/></svg>
<div class="t pt" style="left:746px;top:397px;">Transform</div>
<svg class="a" style="left:821px;top:403px" width="11" height="5" viewBox="0 0 11 5"><rect x="0" y="0" width="1.200" height="1.200" fill="#3a3a3a"/><rect x="1" y="1" width="1" height="1" fill="#9a9a9a"/><rect x="0" y="3" width="1.200" height="1.200" fill="#3a3a3a"/><rect x="1" y="4" width="1" height="1" fill="#9a9a9a"/><rect x="3" y="0" width="1.200" height="1.200" fill="#3a3a3a"/><rect x="4" y="1" width="1" height="1" fill="#9a9a9a"/><rect x="3" y="3" width="1.200" height="1.200" fill="#3a3a3a"/><rect x="4" y="4" width="1" height="1" fill="#9a9a9a"/><rect x="6" y="0" width="1.200" height="1.200" fill="#3a3a3a"/><rect x="7" y="1" width="1" height="1" fill="#9a9a9a"/><rect x="6" y="3" width="1.200" height="1.200" fill="#3a3a3a"/><rect x="7" y="4" width="1" height="1" fill="#9a9a9a"/><rect x="9" y="0" width="1.200" height="1.200" fill="#3a3a3a"/><rect x="10" y="1" width="1" height="1" fill="#9a9a9a"/><rect x="9" y="3" width="1.200" height="1.200" fill="#3a3a3a"/><rect x="10" y="4" width="1" height="1" fill="#9a9a9a"/></svg>
<div class="btn rt" style="left:729px;top:424px;width:106px;height:20px;"><div class="t" style="left:7px;top:4px">Translate</div></div>
<div class="btn rn" style="left:729px;top:443px;width:106px;height:21px;"><div class="t" style="left:7px;top:4px">Rotate</div></div>
<div class="btn rn" style="left:729px;top:463px;width:106px;height:21px;"><div class="t" style="left:7px;top:4px">Scale</div></div>
<div class="btn rn" style="left:729px;top:483px;width:106px;height:21px;"><div class="t" style="left:7px;top:4px">Shrink/Fatten</div></div>
<div class="btn rb" style="left:729px;top:503px;width:106px;height:21px;"><div class="t" style="left:7px;top:4px">Push/Pull</div></div>
<div class="a" style="left:732px;top:524px;width:100px;height:1px;background:rgba(255,255,255,0.09);"></div>
<div class="a" style="left:844px;top:398px;width:11px;height:131px;border-radius:5.5px;background:linear-gradient(90deg,#4e4e4e,#5e5e5e);box-shadow:0 0 0 1px rgba(40,40,40,.35)"></div>
<div class="a" style="left:844px;top:398px;width:11px;height:26px;border-radius:5.5px;background:linear-gradient(90deg,#8c8c8c,#777);box-shadow:0 0 0 1px rgba(40,40,40,.5)"></div>
<div class="a" style="left:726px;top:532px;width:106px;height:1px;background:#5a5a5a;"></div>
<div class="a" style="left:701px;top:533px;width:159px;height:1px;background:#858585;"></div>
<svg class="a" style="left:712px;top:542px" width="10" height="9" viewBox="0 0 10 9"><path d="M.5 .5h9L5 8.500z" fill="#1a1a1a"/></svg>
<div class="t pt" style="left:725px;top:540px;">Toggle Editmode</div>
<svg class="a" style="left:837px;top:546px" width="11" height="5" viewBox="0 0 11 5"><rect x="0" y="0" width="1.200" height="1.200" fill="#3a3a3a"/><rect x="1" y="1" width="1" height="1" fill="#9a9a9a"/><rect x="0" y="3" width="1.200" height="1.200" fill="#3a3a3a"/><rect x="1" y="4" width="1" height="1" fill="#9a9a9a"/><rect x="3" y="0" width="1.200" height="1.200" fill="#3a3a3a"/><rect x="4" y="1" width="1" height="1" fill="#9a9a9a"/><rect x="3" y="3" width="1.200" height="1.200" fill="#3a3a3a"/><rect x="4" y="4" width="1" height="1" fill="#9a9a9a"/><rect x="6" y="0" width="1.200" height="1.200" fill="#3a3a3a"/><rect x="7" y="1" width="1" height="1" fill="#9a9a9a"/><rect x="6" y="3" width="1.200" height="1.200" fill="#3a3a3a"/><rect x="7" y="4" width="1" height="1" fill="#9a9a9a"/><rect x="9" y="0" width="1.200" height="1.200" fill="#3a3a3a"/><rect x="10" y="1" width="1" height="1" fill="#9a9a9a"/><rect x="9" y="3" width="1.200" height="1.200" fill="#3a3a3a"/><rect x="10" y="4" width="1" height="1" fill="#9a9a9a"/></svg>
<svg class="a" style="left:860px;top:392px" width="521" height="358" viewBox="860 392 521 358"><g shape-rendering="crispEdges" fill="#484848"><rect x="924" y="392" width="1" height="358"/><rect x="1022" y="392" width="1" height="358"/><rect x="1218" y="392" width="1" height="358"/><rect x="1316" y="392" width="1" height="358"/><rect x="860" y="472" width="521" height="1"/><rect x="860" y="669" width="521" height="1"/></g><rect x="860" y="570" width="521" height="1" fill="#7a1f1f" shape-rendering="crispEdges"/><rect x="1120" y="392" width="1" height="358" fill="#2f7a2f" shape-rendering="crispEdges"/><rect x="951.500" y="401.500" width="338" height="339" fill="rgba(0,0,0,0.055)"/><rect x="961.500" y="412.500" width="318" height="317" fill="rgba(0,0,0,0.07)"/><polygon points="968.5,420.5 988.5,420.5 1043.5,483.5 1043.5,495.5 1032.5,495.5 968.5,440.5" fill="rgba(0,0,0,0.08)"/><polygon points="1199.5,483.5 1255.5,420.5 1275.5,420.5 1275.5,440.5 1210.5,495.5 1199.5,495.5" fill="rgba(0,0,0,0.08)"/><polygon points="968.5,707.5 1032.5,650.5 1043.5,650.5 1043.5,662.5 988.5,727.5 968.5,727.5" fill="rgba(0,0,0,0.08)"/><polygon points="1199.5,650.5 1210.5,650.5 1275.5,707.5 1275.5,727.5 1255.5,727.5 1199.5,662.5" fill="rgba(0,0,0,0.08)"/><path d="M951.5 401.5H1289.5V740.5H951.5ZM961.5 412.5H1279.5V729.5H961.5ZM951.5 401.5L961.5 412.5M1289.5 401.5L1279.5 412.5M951.5 740.5L961.5 729.5M1289.5 740.5L1279.5 729.5M968.5 420.5H988.5V440.5H968.5ZM1032.5 483.5H1043.5V495.5H1032.5ZM968.5 420.5L1032.5 483.5M988.5 420.5L1043.5 483.5M968.5 440.5L1032.5 495.5M988.5 440.5L1043.5 495.5M1255.5 420.5H1275.5V440.5H1255.5ZM1199.5 483.5H1210.5V495.5H1199.5ZM1255.5 420.5L1199.5 483.5M1275.5 420.5L1210.5 483.5M1255.5 440.5L1199.5 495.5M1275.5 440.5L1210.5 495.5M968.5 707.5H988.5V727.5H968.5ZM1032.5 650.5H1043.5V662.5H1032.5ZM968.5 707.5L1032.5 650.5M988.5 707.5L1043.5 650.5M968.5 727.5L1032.5 662.5M988.5 727.5L1043.5 662.5M1255.5 707.5H1275.5V727.5H1255.5ZM1199.5 650.5H1210.5V662.5H1199.5ZM1255.5 707.5L1199.5 650.5M1275.5 707.5L1210.5 650.5M1255.5 727.5L1199.5 662.5M1275.5 727.5L1210.5 662.5" fill="none" stroke="#000" stroke-width="1"/><rect x="1119" y="405" width="4" height="4" fill="#000" shape-rendering="crispEdges"/><rect x="1119" y="733" width="4" height="4" fill="#000" shape-rendering="crispEdges"/><rect x="955" y="569" width="4" height="4" fill="#000" shape-rendering="crispEdges"/><rect x="1282" y="569" width="4" height="4" fill="#000" shape-rendering="crispEdges"/><rect x="977" y="429" width="4" height="4" fill="#000" shape-rendering="crispEdges"/><rect x="1036" y="487" width="4" height="4" fill="#000" shape-rendering="crispEdges"/><rect x="1014" y="458" width="4" height="4" fill="#000" shape-rendering="crispEdges"/><rect x="1014" y="473" width="4" height="4" fill="#000" shape-rendering="crispEdges"/><rect x="1007" y="466" width="4" height="4" fill="#000" shape-rendering="crispEdges"/><rect x="1021" y="466" width="4" height="4" fill="#000" shape-rendering="crispEdges"/><rect x="1264" y="429" width="4" height="4" fill="#000" shape-rendering="crispEdges"/><rect x="1203" y="487" width="4" height="4" fill="#000" shape-rendering="crispEdges"/><rect x="1225" y="458" width="4" height="4" fill="#000" shape-rendering="crispEdges"/><rect x="1225" y="473" width="4" height="4" fill="#000" shape-rendering="crispEdges"/><rect x="1218" y="466" width="4" height="4" fill="#000" shape-rendering="crispEdges"/><rect x="1232" y="466" width="4" height="4" fill="#000" shape-rendering="crispEdges"/><rect x="977" y="716" width="4" height="4" fill="#000" shape-rendering="crispEdges"/><rect x="1036" y="654" width="4" height="4" fill="#000" shape-rendering="crispEdges"/><rect x="1014" y="669" width="4" height="4" fill="#000" shape-rendering="crispEdges"/><rect x="1014" y="684" width="4" height="4" fill="#000" shape-rendering="crispEdges"/><rect x="1007" y="677" width="4" height="4" fill="#000" shape-rendering="crispEdges"/><rect x="1021" y="677" width="4" height="4" fill="#000" shape-rendering="crispEdges"/><rect x="1264" y="716" width="4" height="4" fill="#000" shape-rendering="crispEdges"/><rect x="1203" y="654" width="4" height="4" fill="#000" shape-rendering="crispEdges"/><rect x="1225" y="669" width="4" height="4" fill="#000" shape-rendering="crispEdges"/><rect x="1225" y="684" width="4" height="4" fill="#000" shape-rendering="crispEdges"/><rect x="1218" y="677" width="4" height="4" fill="#000" shape-rendering="crispEdges"/><rect x="1232" y="677" width="4" height="4" fill="#000" shape-rendering="crispEdges"/><rect x="1118" y="568" width="5" height="5" fill="#e39a43" stroke="#7a4a12" stroke-width=".6" shape-rendering="crispEdges"/><circle cx="1134.5" cy="674.5" r="10" fill="none" stroke="#fff" stroke-width="1.200"/><circle cx="1134.5" cy="674.5" r="10" fill="none" stroke="#e01010" stroke-width="1.200" stroke-dasharray="3.930 3.930"/><path d="M1114.5 674.5h14M1140.5 674.5h14M1134.5 654.5v14M1134.5 680.5v14" stroke="#000" stroke-width="1"/><path d="M886 724.500V699" stroke="#12c012" stroke-width="2"/><path d="M886 724H911" stroke="#c81414" stroke-width="2"/><text x="888" y="696.500" font-size="11" fill="#12c012" letter-spacing="0">y</text><text x="913" y="722" font-size="11" fill="#c81414" letter-spacing="0">x</text></svg>
<div class="t w" style="left:880px;top:403px;letter-spacing:-0.8px">Top Persp</div>
<div class="t w" style="left:930px;top:730px;">(1) Cube</div>
<div class="a" style="left:1368px;top:414px;width:13px;height:14px;background:rgba(0,0,0,.25);border-radius:4px 0 0 4px"><svg class="a" style="left:3px;top:4px" width="6.500" height="6.500" viewBox="0 0 7 7"><path d="M2.500 0h2v2.500H7v2H4.500V7h-2V4.500H0v-2h2.500z" fill="#828282"/></svg></div>
<svg class="a" style="left:1369px;top:392px" width="12" height="12" viewBox="0 0 12 12"><g fill="none"><path d="M0 0 L12 12 M4 0 L12 8 M8 0 L12 4" stroke="#2c2c2c" stroke-width="1.3"/><path d="M1.5 0 L12 10.5 M5.5 0 L12 6.5 M9.5 0 L12 2.5" stroke="#b4b4b4" stroke-width="1.1"/></g></svg>
<div class="a" style="left:860px;top:392px;width:521px;height:1px;background:#4a4a4a;"></div>
<div class="a" style="left:702px;top:750px;width:679px;height:1px;background:rgba(255,255,255,0.10);"></div>
<div class="mnu " style="left:710px;top:753px;width:30px;height:20px;"></div>
<svg class="a" style="left:729px;top:756px" width="8" height="14" viewBox="0 0 8 14"><path d="M4 0.300 L6.900 5.700 L1.100 5.700 Z M1.100 8.300 L6.900 8.300 L4 13.700 Z" fill="#b8b8b8"/></svg>
<svg class="a" style="left:714px;top:755px" width="15" height="15" viewBox="0 0 15 15"><path d="M1.500 3L7.500 1.500l6 1.500v7.500l-6 3-6-3z" fill="#8e8e8e" stroke="#1a1a1a" stroke-width=".9"/><path d="M1.500 3l6 2v8.500l-6-3z" fill="#f4f4f4"/><path d="M7.500 5l6-2v7.500l-6 3z" fill="#8a8a8a"/><path d="M1.500 3L7.500 1.500l6 1.500-6 2z" fill="#e6e6e6"/></svg>
<div class="a" style="left:712px;top:773px;width:26px;height:1px;background:rgba(255,255,255,0.09);"></div>
<div class="t " style="left:752px;top:758px;">View</div>
<div class="t " style="left:797px;top:758px;">Select</div>
<div class="t " style="left:848px;top:758px;">Add</div>
<div class="t " style="left:887px;top:758px;">Mesh</div>
<div class="mnu " style="left:926px;top:753px;width:99px;height:20px;"><div class="t w" style="left:23px;top:4px">Edit Mode</div><svg class="a" style="left:87.5px;top:2.0px" width="8" height="14" viewBox="0 0 8 14"><path d="M4 0.300 L6.900 5.700 L1.100 5.700 Z M1.100 8.300 L6.900 8.300 L4 13.700 Z" fill="#b8b8b8"/></svg></div>
<svg class="a" style="left:930px;top:755px" width="16" height="16" viewBox="0 0 16 16"><path d="M3 4l5.500-2 5 2v7l-5 3-5.500-3z" fill="#9a9a9a" stroke="#222" stroke-width=".8"/><path d="M3 4l5.500 2v8M8.500 6l5-2" fill="none" stroke="#333" stroke-width=".7"/><path d="M3 4l5.500 2v8L3 11z" fill="#d8d8d8"/><g fill="#fff" stroke="#e8861a" stroke-width="1"><rect x="1.500" y="2.500" width="3" height="3"/><rect x="1.500" y="9.500" width="3" height="3"/><rect x="7" y="4.500" width="3" height="3"/><rect x="7" y="12" width="3" height="3"/></g></svg>
<div class="a" style="left:929px;top:773px;width:93px;height:1px;background:rgba(255,255,255,0.09);"></div>
<div class="mnu " style="left:1031px;top:753px;width:34px;height:20px;"><svg class="a" style="left:22.5px;top:2.0px" width="8" height="14" viewBox="0 0 8 14"><path d="M4 0.300 L6.900 5.700 L1.100 5.700 Z M1.100 8.300 L6.900 8.300 L4 13.700 Z" fill="#b8b8b8"/></svg></div>
<svg class="a" style="left:1035px;top:756px" width="14" height="14" viewBox="0 0 14 14"><circle cx="7" cy="7" r="6.200" fill="#ececec" stroke="#1a1a1a" stroke-width="1"/><path d="M7 .8v12.400M.8 7h12.400M3.500 1.800c-2 3-2 7.400 0 10.400M10.500 1.800c2 3 2 7.400 0 10.400M1.500 4h11M1.500 10h11" fill="none" stroke="#1a1a1a" stroke-width=".9"/></svg>
<div class="a" style="left:1034px;top:773px;width:28px;height:1px;background:rgba(255,255,255,0.09);"></div>
<div class="mnu " style="left:1070px;top:753px;width:35px;height:20px;"><svg class="a" style="left:23.5px;top:2.0px" width="8" height="14" viewBox="0 0 8 14"><path d="M4 0.300 L6.900 5.700 L1.100 5.700 Z M1.100 8.300 L6.900 8.300 L4 13.700 Z" fill="#b8b8b8"/></svg></div>
<svg class="a" style="left:1074px;top:755px" width="16" height="16" viewBox="0 0 16 16"><circle cx="5" cy="5" r="4" fill="#f0f0f0" stroke="#222" stroke-width=".7"/><circle cx="10.500" cy="11" r="4" fill="#f0f0f0" stroke="#222" stroke-width=".7"/><rect x="6.200" y="6.500" width="3.200" height="3.200" fill="#fff" stroke="#1f5fd0" stroke-width="1.100"/></svg>
<div class="a" style="left:1073px;top:773px;width:29px;height:1px;background:rgba(255,255,255,0.09);"></div>
<div class="btn rl" style="left:1110px;top:753px;width:20px;height:20px;background:linear-gradient(#868686,#6e6e6e)"><svg class="a" style="left:1px;top:1px" width="17" height="17" viewBox="0 0 17 17"><path d="M8.500 10V2" stroke="#4a7fe0" stroke-width="2"/><path d="M8.500 10L2.500 14.500" stroke="#d8372b" stroke-width="2"/><path d="M8.500 10l6 4.500" stroke="#63c02c" stroke-width="2"/><circle cx="8.500" cy="2" r="1.300" fill="#dfe9ff"/><circle cx="2.500" cy="14.500" r="1.400" fill="#ffd6d0"/><circle cx="14.500" cy="14.500" r="1.400" fill="#e2ffcf"/><circle cx="8.500" cy="10" r="1.400" fill="#fff"/></svg></div>
<div class="mnu rn" style="left:1129px;top:753px;width:21px;height:20px;background:linear-gradient(#6690d2,#466eb2)"><svg class="a" style="left:1px;top:1px" width="17" height="17" viewBox="0 0 17 17"><path d="M2.500 14.500L11 6" stroke="#1c3a70" stroke-width="3.400"/><path d="M7.500 3.500l7-1-1 7z" fill="#9cc0ff" stroke="#1c3a70" stroke-width="1"/><path d="M2.500 14.500L11 6" stroke="#8db4f5" stroke-width="1.800"/></svg></div>
<div class="mnu rn" style="left:1149px;top:753px;width:21px;height:20px;background:linear-gradient(#555,#373737)"><svg class="a" style="left:1px;top:1px" width="17" height="17" viewBox="0 0 17 17"><path d="M3 14c0-6 4-10 10-10" fill="none" stroke="#24406f" stroke-width="3.200"/><path d="M3 14c0-6 4-10 10-10" fill="none" stroke="#5a7fba" stroke-width="1.800"/></svg></div>
<div class="mnu rn" style="left:1169px;top:753px;width:21px;height:20px;background:linear-gradient(#555,#373737)"><svg class="a" style="left:1px;top:1px" width="17" height="17" viewBox="0 0 17 17"><path d="M3 14.500L10 7" stroke="#24406f" stroke-width="3.200"/><path d="M3 14.500L10 7" stroke="#5a7fba" stroke-width="1.800"/><rect x="8.500" y="2.500" width="6" height="6" fill="#5a7fba" stroke="#24406f" stroke-width=".9"/></svg></div>
<div class="mnu rr" style="left:1189px;top:753px;width:74px;height:20px;"><div class="t w" style="left:8px;top:4px">Global</div><svg class="a" style="left:62.5px;top:2.0px" width="8" height="14" viewBox="0 0 8 14"><path d="M4 0.300 L6.900 5.700 L1.100 5.700 Z M1.100 8.300 L6.900 8.300 L4 13.700 Z" fill="#b8b8b8"/></svg></div>
<div class="a" style="left:1113px;top:773px;width:147px;height:1px;background:rgba(255,255,255,0.09);"></div>
<div class="btn rl" style="left:1267px;top:753px;width:20px;height:20px;"><svg class="a" style="left:1px;top:0px" width="17" height="17" viewBox="0 0 17 17"><path d="M2.500 5l6-2.500 6 2.500v7l-6 3-6-3z" fill="#a9a9a9" stroke="#555" stroke-width=".8"/><path d="M2.500 5l6 2.500v7.500M8.500 7.500l6-2.500" fill="none" stroke="#666" stroke-width=".7"/><path d="M2.500 5l6 2.500v7.500l-6-3z" fill="#cfcfcf"/><rect x="1.300" y="3.500" width="3" height="3" fill="#f0b070" stroke="#8a5a20" stroke-width=".6"/></svg></div>
<div class="btn rn" style="left:1286px;top:753px;width:21px;height:20px;"><svg class="a" style="left:1px;top:0px" width="17" height="17" viewBox="0 0 17 17"><path d="M2.500 5l6-2.500 6 2.500v7l-6 3-6-3z" fill="#a9a9a9" stroke="#555" stroke-width=".8"/><path d="M2.500 5l6 2.500v7.500M8.500 7.500l6-2.500" fill="none" stroke="#666" stroke-width=".7"/><path d="M2.500 5l6 2.500v7.500l-6-3z" fill="#cfcfcf"/><rect x="1.600" y="4.500" width="2" height="8" fill="#f0b070" stroke="#8a5a20" stroke-width=".5"/></svg></div>
<div class="btn rr" style="left:1306px;top:753px;width:21px;height:20px;background:linear-gradient(#555,#6a6a6a)"><svg class="a" style="left:1px;top:0px" width="17" height="17" viewBox="0 0 17 17"><path d="M2.500 5l6-2.500 6 2.500v7l-6 3-6-3z" fill="#8a8a8a" stroke="#222" stroke-width=".8"/><path d="M2.500 5l6 2.500v7.500M8.500 7.500l6-2.500" fill="none" stroke="#666" stroke-width=".7"/><path d="M2.500 5l6 2.500v7.500l-6-3z" fill="#f0a040"/></svg></div>
<div class="a" style="left:1270px;top:773px;width:54px;height:1px;background:rgba(255,255,255,0.09);"></div>
<div class="mnu " style="left:1332px;top:753px;width:35px;height:20px;"><svg class="a" style="left:23.5px;top:2.0px" width="8" height="14" viewBox="0 0 8 14"><path d="M4 0.300 L6.900 5.700 L1.100 5.700 Z M1.100 8.300 L6.900 8.300 L4 13.700 Z" fill="#b8b8b8"/></svg></div>
<svg class="a" style="left:1337px;top:756px" width="14" height="14" viewBox="0 0 14 14"><circle cx="7" cy="7" r="5.600" fill="#555" stroke="#8a8a8a" stroke-width="1.400"/><circle cx="7" cy="7" r="2.200" fill="#8a8a8a"/></svg>
<div class="a" style="left:1335px;top:773px;width:29px;height:1px;background:rgba(255,255,255,0.09);"></div>
<div class="btn rl" style="left:1372px;top:753px;width:12px;height:20px;border-right:0;width:9px"></div>
<svg class="a" style="left:701px;top:764px" width="12" height="12" viewBox="0 0 12 12"><g fill="none"><path d="M0 0 L12 12 M0 4 L8 12 M0 8 L4 12" stroke="#2c2c2c" stroke-width="1.3"/><path d="M0 1.5 L10.5 12 M0 5.5 L6.5 12 M0 9.5 L2.5 12" stroke="#b4b4b4" stroke-width="1.1"/></g></svg>
<div class="a" style="left:8px;top:777px;width:236px;height:32px;background:#454545;"></div>
<svg class="a" style="left:8px;top:777px" width="1373" height="32" viewBox="8 777 1373 32" shape-rendering="crispEdges"><rect x="19" y="777" width="1" height="32" fill="#3a3a3a"/><rect x="40" y="777" width="1" height="32" fill="#3a3a3a"/><rect x="60" y="777" width="1" height="32" fill="#3a3a3a"/><rect x="80" y="777" width="1" height="32" fill="#3a3a3a"/><rect x="100" y="777" width="1" height="32" fill="#3a3a3a"/><rect x="120" y="777" width="1" height="32" fill="#3a3a3a"/><rect x="140" y="777" width="1" height="32" fill="#3a3a3a"/><rect x="160" y="777" width="1" height="32" fill="#3a3a3a"/><rect x="180" y="777" width="1" height="32" fill="#3a3a3a"/><rect x="201" y="777" width="1" height="32" fill="#3a3a3a"/><rect x="221" y="777" width="1" height="32" fill="#3a3a3a"/><rect x="241" y="777" width="1" height="32" fill="#2c2c2c"/><rect x="261" y="777" width="1" height="32" fill="#676767"/><rect x="281" y="777" width="1" height="32" fill="#676767"/><rect x="301" y="777" width="1" height="32" fill="#676767"/><rect x="321" y="777" width="1" height="32" fill="#676767"/><rect x="341" y="777" width="1" height="32" fill="#676767"/><rect x="362" y="777" width="1" height="32" fill="#676767"/><rect x="382" y="777" width="1" height="32" fill="#676767"/><rect x="402" y="777" width="1" height="32" fill="#676767"/><rect x="422" y="777" width="1" height="32" fill="#676767"/><rect x="442" y="777" width="1" height="32" fill="#676767"/><rect x="462" y="777" width="1" height="32" fill="#676767"/><rect x="482" y="777" width="1" height="32" fill="#676767"/><rect x="502" y="777" width="1" height="32" fill="#676767"/><rect x="523" y="777" width="1" height="32" fill="#676767"/><rect x="543" y="777" width="1" height="32" fill="#676767"/><rect x="563" y="777" width="1" height="32" fill="#676767"/><rect x="583" y="777" width="1" height="32" fill="#676767"/><rect x="603" y="777" width="1" height="32" fill="#676767"/><rect x="623" y="777" width="1" height="32" fill="#676767"/><rect x="643" y="777" width="1" height="32" fill="#676767"/><rect x="663" y="777" width="1" height="32" fill="#676767"/><rect x="684" y="777" width="1" height="32" fill="#676767"/><rect x="704" y="777" width="1" height="32" fill="#676767"/><rect x="724" y="777" width="1" height="32" fill="#676767"/><rect x="744" y="777" width="1" height="32" fill="#676767"/><rect x="764" y="777" width="1" height="32" fill="#676767"/><rect x="784" y="777" width="1" height="32" fill="#676767"/><rect x="804" y="777" width="1" height="32" fill="#676767"/><rect x="824" y="777" width="1" height="32" fill="#676767"/><rect x="845" y="777" width="1" height="32" fill="#676767"/><rect x="865" y="777" width="1" height="32" fill="#676767"/><rect x="885" y="777" width="1" height="32" fill="#676767"/><rect x="905" y="777" width="1" height="32" fill="#676767"/><rect x="925" y="777" width="1" height="32" fill="#676767"/><rect x="945" y="777" width="1" height="32" fill="#676767"/><rect x="965" y="777" width="1" height="32" fill="#676767"/><rect x="985" y="777" width="1" height="32" fill="#676767"/><rect x="1006" y="777" width="1" height="32" fill="#676767"/><rect x="1026" y="777" width="1" height="32" fill="#676767"/><rect x="1046" y="777" width="1" height="32" fill="#676767"/><rect x="1066" y="777" width="1" height="32" fill="#676767"/><rect x="1086" y="777" width="1" height="32" fill="#676767"/><rect x="1106" y="777" width="1" height="32" fill="#676767"/><rect x="1126" y="777" width="1" height="32" fill="#676767"/><rect x="1146" y="777" width="1" height="32" fill="#676767"/><rect x="1167" y="777" width="1" height="32" fill="#676767"/><rect x="1187" y="777" width="1" height="32" fill="#676767"/><rect x="1207" y="777" width="1" height="32" fill="#676767"/><rect x="1227" y="777" width="1" height="32" fill="#676767"/><rect x="1247" y="777" width="1" height="32" fill="#676767"/><rect x="1267" y="777" width="1" height="32" fill="#676767"/><rect x="1287" y="777" width="1" height="32" fill="#676767"/><rect x="1307" y="777" width="1" height="32" fill="#676767"/><rect x="1328" y="777" width="1" height="32" fill="#676767"/><rect x="1348" y="777" width="1" height="32" fill="#676767"/><rect x="1368" y="777" width="1" height="32" fill="#676767"/><rect x="244" y="777" width="3" height="32" fill="#4fc434"/></svg>
<div class="a" style="left:12px;top:810px;width:1367px;height:12px;border-radius:6px;background:linear-gradient(#8a8a8a,#7b7b7b);box-shadow:0 0 0 1px rgba(45,45,45,.6)"></div>
<div class="a" style="left:14px;top:812px;width:8px;height:8px;border-radius:4px;background:#5e5e5e"></div>
<div class="t" style="left:21.0px;top:810px;width:40px;text-align:center;letter-spacing:-0.3px">-50</div>
<div class="t" style="left:60.9px;top:810px;width:40px;text-align:center;letter-spacing:-0.3px">-40</div>
<div class="t" style="left:100.8px;top:810px;width:40px;text-align:center;letter-spacing:-0.3px">-30</div>
<div class="t" style="left:140.7px;top:810px;width:40px;text-align:center;letter-spacing:-0.3px">-20</div>
<div class="t" style="left:180.6px;top:810px;width:40px;text-align:center;letter-spacing:-0.3px">-10</div>
<div class="t" style="left:223.5px;top:810px;width:40px;text-align:center;letter-spacing:-0.3px">0</div>
<div class="t" style="left:263.4px;top:810px;width:40px;text-align:center;letter-spacing:-0.3px">10</div>
<div class="t" style="left:303.3px;top:810px;width:40px;text-align:center;letter-spacing:-0.3px">20</div>
<div class="t" style="left:343.2px;top:810px;width:40px;text-align:center;letter-spacing:-0.3px">30</div>
<div class="t" style="left:383.1px;top:810px;width:40px;text-align:center;letter-spacing:-0.3px">40</div>
<div class="t" style="left:423.0px;top:810px;width:40px;text-align:center;letter-spacing:-0.3px">50</div>
<div class="t" style="left:462.9px;top:810px;width:40px;text-align:center;letter-spacing:-0.3px">60</div>
<div class="t" style="left:502.8px;top:810px;width:40px;text-align:center;letter-spacing:-0.3px">70</div>
<div class="t" style="left:542.7px;top:810px;width:40px;text-align:center;letter-spacing:-0.3px">80</div>
<div class="t" style="left:582.6px;top:810px;width:40px;text-align:center;letter-spacing:-0.3px">90</div>
<div class="t" style="left:622.5px;top:810px;width:40px;text-align:center;letter-spacing:-0.3px">100</div>
<div class="t" style="left:662.4px;top:810px;width:40px;text-align:center;letter-spacing:-0.3px">110</div>
<div class="t" style="left:702.3px;top:810px;width:40px;text-align:center;letter-spacing:-0.3px">120</div>
<div class="t" style="left:742.2px;top:810px;width:40px;text-align:center;letter-spacing:-0.3px">130</div>
<div class="t" style="left:782.1px;top:810px;width:40px;text-align:center;letter-spacing:-0.3px">140</div>
<div class="t" style="left:822.0px;top:810px;width:40px;text-align:center;letter-spacing:-0.3px">150</div>
<div class="t" style="left:861.9px;top:810px;width:40px;text-align:center;letter-spacing:-0.3px">160</div>
<div class="t" style="left:901.8px;top:810px;width:40px;text-align:center;letter-spacing:-0.3px">170</div>
<div class="t" style="left:941.7px;top:810px;width:40px;text-align:center;letter-spacing:-0.3px">180</div>
<div class="t" style="left:981.6px;top:810px;width:40px;text-align:center;letter-spacing:-0.3px">190</div>
<div class="t" style="left:1021.5px;top:810px;width:40px;text-align:center;letter-spacing:-0.3px">200</div>
<div class="t" style="left:1061.4px;top:810px;width:40px;text-align:center;letter-spacing:-0.3px">210</div>
<div class="t" style="left:1101.3px;top:810px;width:40px;text-align:center;letter-spacing:-0.3px">220</div>
<div class="t" style="left:1141.2px;top:810px;width:40px;text-align:center;letter-spacing:-0.3px">230</div>
<div class="t" style="left:1181.1px;top:810px;width:40px;text-align:center;letter-spacing:-0.3px">240</div>
<div class="t" style="left:1221.0px;top:810px;width:40px;text-align:center;letter-spacing:-0.3px">250</div>
<div class="t" style="left:1260.9px;top:810px;width:40px;text-align:center;letter-spacing:-0.3px">260</div>
<div class="t" style="left:1300.8px;top:810px;width:40px;text-align:center;letter-spacing:-0.3px">270</div>
<div class="t" style="left:1340.7px;top:810px;width:40px;text-align:center;letter-spacing:-0.3px">280</div>
<div class="a" style="left:8px;top:825px;width:1373px;height:1px;background:rgba(255,255,255,0.10);"></div>
<div class="mnu " style="left:17px;top:829px;width:30px;height:20px;"></div>
<svg class="a" style="left:36px;top:832px" width="8" height="14" viewBox="0 0 8 14"><path d="M4 0.300 L6.900 5.700 L1.100 5.700 Z M1.100 8.300 L6.900 8.300 L4 13.700 Z" fill="#b8b8b8"/></svg>
<svg class="a" style="left:22px;top:832px" width="14" height="14" viewBox="0 0 14 14"><circle cx="7" cy="7" r="6.200" fill="#ececec" stroke="#0c0c0c" stroke-width="1.200"/><circle cx="5.500" cy="5" r="3" fill="#fff" opacity=".6"/><path d="M7 7L9.800 3.800" stroke="#444" stroke-width="1"/><path d="M7 7l2.300 2.800" stroke="#e01020" stroke-width="1.500"/><g fill="#999"><circle cx="7" cy="2.300" r=".45"/><circle cx="7" cy="11.700" r=".45"/><circle cx="2.300" cy="7" r=".45"/><circle cx="11.700" cy="7" r=".45"/></g></svg>
<div class="a" style="left:19px;top:849px;width:26px;height:1px;background:rgba(255,255,255,0.09);"></div>
<div class="t " style="left:59px;top:834px;">View</div>
<div class="t " style="left:104px;top:834px;">Marker</div>
<div class="t " style="left:159px;top:834px;">Frame</div>
<div class="t " style="left:211px;top:834px;">Playback</div>
<div class="btn rl" style="left:270px;top:829px;width:20px;height:20px;"><svg class="a" style="left:2px;top:2px" width="14" height="14" viewBox="0 0 14 14"><circle cx="7" cy="7" r="6.200" fill="#f4f4f4" stroke="#333" stroke-width=".9"/><path d="M7 7V.8A6.200 6.200 0 0 1 13.200 7z" fill="#f0a020"/><path d="M7 2.500V7h3.500" fill="none" stroke="#333" stroke-width="1"/></svg></div>
<div class="btn rr" style="left:289px;top:829px;width:20px;height:20px;"><svg class="a" style="left:3px;top:2px" width="12" height="14" viewBox="0 0 12 14"><path d="M3 7V4.500a3 3 0 0 1 6 0V7" fill="none" stroke="#333" stroke-width="2.400"/><path d="M3 7V4.500a3 3 0 0 1 6 0V7" fill="none" stroke="#eee" stroke-width="1.200"/><rect x="1.500" y="6.500" width="9" height="6.500" rx="1" fill="#f0f0f0" stroke="#333" stroke-width=".9"/><rect x="3" y="8.500" width="6" height="1" fill="#999"/><rect x="3" y="10.500" width="6" height="1" fill="#999"/></svg></div>
<div class="a" style="left:273px;top:849px;width:33px;height:1px;background:rgba(255,255,255,0.09);"></div>
<div class="num rl" style="left:314px;top:829px;width:117px;height:20px;"><svg class="a" style="left:5px;top:5px" width="5" height="8" viewBox="0 0 5 8"><path d="M4.500 .5v7L.5 4z" fill="#757575"/></svg><svg class="a" style="left:105px;top:5px" width="5" height="8" viewBox="0 0 5 8"><path d="M.5 .5v7L4.500 4z" fill="#757575"/></svg><div class="t" style="left:16px;top:4px">Start:</div><div class="t" style="right:16px;top:4px">1</div></div>
<div class="num rr" style="left:430px;top:829px;width:112px;height:20px;"><svg class="a" style="left:5px;top:5px" width="5" height="8" viewBox="0 0 5 8"><path d="M4.500 .5v7L.5 4z" fill="#757575"/></svg><svg class="a" style="left:100px;top:5px" width="5" height="8" viewBox="0 0 5 8"><path d="M.5 .5v7L4.500 4z" fill="#757575"/></svg><div class="t" style="left:16px;top:4px">End:</div><div class="t" style="right:16px;top:4px">250</div></div>
<div class="a" style="left:320px;top:849px;width:216px;height:1px;background:rgba(255,255,255,0.09);"></div>
<div class="num " style="left:547px;top:829px;width:90px;height:20px;"><svg class="a" style="left:5px;top:5px" width="5" height="8" viewBox="0 0 5 8"><path d="M4.500 .5v7L.5 4z" fill="#757575"/></svg><svg class="a" style="left:78px;top:5px" width="5" height="8" viewBox="0 0 5 8"><path d="M.5 .5v7L4.500 4z" fill="#757575"/></svg><div class="t" style="right:16px;top:4px">1</div></div>
<div class="a" style="left:553px;top:849px;width:78px;height:1px;background:rgba(255,255,255,0.09);"></div>
<div class="btn rl" style="left:653px;top:829px;width:20px;height:20px;"><svg class="a" style="left:2px;top:2px" width="15" height="14" viewBox="0 0 15 14" fill="#f2f2f2" stroke="#222" stroke-width=".9"><path d="M1.500 2v10M8 2v10L2.500 7zM13.500 2v10L8 7z"/><rect x="1" y="2" width="1.500" height="10"/></svg></div>
<div class="btn rn" style="left:672px;top:829px;width:21px;height:20px;"><svg class="a" style="left:2px;top:2px" width="15" height="14" viewBox="0 0 15 14" fill="#f2f2f2" stroke="#222" stroke-width=".9"><path d="M7.500 2.500v9L1.500 7zM13.500 2.500v9L7.500 7z"/></svg></div>
<div class="btn rn" style="left:692px;top:829px;width:21px;height:20px;"><svg class="a" style="left:2px;top:2px" width="15" height="14" viewBox="0 0 15 14" fill="#f2f2f2" stroke="#222" stroke-width=".9"><path d="M12.500 .5v13L2 7z"/></svg></div>
<div class="btn rn" style="left:712px;top:829px;width:21px;height:20px;"><svg class="a" style="left:2px;top:2px" width="15" height="14" viewBox="0 0 15 14" fill="#f2f2f2" stroke="#222" stroke-width=".9"><path d="M2.500 .5v13L13 7z"/></svg></div>
<div class="btn rn" style="left:732px;top:829px;width:21px;height:20px;"><svg class="a" style="left:2px;top:2px" width="15" height="14" viewBox="0 0 15 14" fill="#f2f2f2" stroke="#222" stroke-width=".9"><path d="M1.500 2.500v9L7.500 7zM7.500 2.500v9L13.500 7z"/></svg></div>
<div class="btn rr" style="left:752px;top:829px;width:21px;height:20px;"><svg class="a" style="left:2px;top:2px" width="15" height="14" viewBox="0 0 15 14" fill="#f2f2f2" stroke="#222" stroke-width=".9"><path d="M1.500 2v10L7 7zM7 2v10L12.500 7z"/><rect x="12.500" y="2" width="1.500" height="10"/></svg></div>
<div class="a" style="left:656px;top:849px;width:114px;height:1px;background:rgba(255,255,255,0.09);"></div>
<div class="mnu " style="left:778px;top:829px;width:115px;height:20px;"><div class="t w" style="left:7px;top:4px">No Sync</div><svg class="a" style="left:103.5px;top:2.0px" width="8" height="14" viewBox="0 0 8 14"><path d="M4 0.300 L6.900 5.700 L1.100 5.700 Z M1.100 8.300 L6.900 8.300 L4 13.700 Z" fill="#b8b8b8"/></svg></div>
<div class="a" style="left:781px;top:849px;width:109px;height:1px;background:rgba(255,255,255,0.09);"></div>
<div class="btn " style="left:909px;top:829px;width:20px;height:20px;"><svg class="a" style="left:3px;top:3px" width="12" height="12" viewBox="0 0 12 12"><circle cx="6" cy="6" r="4.800" fill="#e8431f" stroke="#7a1d0a" stroke-width=".9"/><circle cx="4.800" cy="4.600" r="1.500" fill="#ff9a7a" opacity=".7"/></svg></div>
<div class="a" style="left:911px;top:849px;width:16px;height:1px;background:rgba(255,255,255,0.09);"></div>
<div class="btn rl" style="left:934px;top:829px;width:131px;height:20px;background:linear-gradient(#999,#b2b2b2)"><svg class="a" style="left:3px;top:1px" width="17" height="16" viewBox="0 0 17 16"><path d="M4.500 2v9" stroke="#6b5a10" stroke-width="2.600"/><path d="M4.500 2v9M4.500 2.500h2.500" stroke="#f0d860" stroke-width="1.300"/><circle cx="5" cy="12.500" r="2.300" fill="none" stroke="#6b5a10" stroke-width="2.400"/><circle cx="5" cy="12.500" r="2.300" fill="none" stroke="#f0d860" stroke-width="1.200"/><path d="M8 11l6.500-5" stroke="#333" stroke-width="2.800"/><path d="M8 11l6.500-5" stroke="#eee" stroke-width="1.400"/><circle cx="9" cy="11.500" r="2" fill="#eee" stroke="#333" stroke-width=".8"/></svg></div>
<div class="btn rn" style="left:1064px;top:829px;width:21px;height:20px;"><svg class="a" style="left:1px;top:1px" width="17" height="17" viewBox="0 0 17 17"><path d="M6 11l7-6" stroke="#333" stroke-width="3"/><path d="M6 11l7-6" stroke="#eee" stroke-width="1.500"/><circle cx="5" cy="11.500" r="2.600" fill="#eee" stroke="#333" stroke-width=".9"/><circle cx="5" cy="11.500" r="1" fill="#777"/></svg></div>
<div class="btn rr" style="left:1084px;top:829px;width:21px;height:20px;"><svg class="a" style="left:1px;top:1px" width="17" height="17" viewBox="0 0 17 17"><path d="M6 11l7-6" stroke="#333" stroke-width="3"/><path d="M6 11l7-6" stroke="#eee" stroke-width="1.500"/><circle cx="5" cy="11.500" r="2.600" fill="#eee" stroke="#333" stroke-width=".9"/><circle cx="5" cy="11.500" r="1" fill="#777"/><path d="M2.500 3l11 11" stroke="#e02020" stroke-width="1.600"/></svg></div>
<div class="a" style="left:937px;top:849px;width:165px;height:1px;background:rgba(255,255,255,0.09);"></div>
<svg class="a" style="left:8px;top:839px" width="12" height="12" viewBox="0 0 12 12"><g fill="none"><path d="M0 0 L12 12 M0 4 L8 12 M0 8 L4 12" stroke="#2c2c2c" stroke-width="1.3"/><path d="M0 1.5 L10.5 12 M0 5.5 L6.5 12 M0 9.5 L2.5 12" stroke="#b4b4b4" stroke-width="1.1"/></g></svg>
<div class="a" style="left:1383px;top:84px;width:209px;height:1px;background:#5c5c5c;"></div>
<div class="a" style="left:1383px;top:105px;width:209px;height:20px;background:rgba(255,255,255,0.035);"></div>
<div class="a" style="left:1383px;top:145px;width:209px;height:20px;background:rgba(255,255,255,0.035);"></div>
<div class="a" style="left:1532px;top:85px;width:1px;height:85px;background:#5e5e5e;"></div>
<div class="a" style="left:1552px;top:85px;width:1px;height:85px;background:#5e5e5e;"></div>
<div class="a" style="left:1572px;top:85px;width:1px;height:85px;background:#5e5e5e;"></div>
<div class="mnu " style="left:1391px;top:61px;width:30px;height:20px;"></div>
<svg class="a" style="left:1410px;top:64px" width="8" height="14" viewBox="0 0 8 14"><path d="M4 0.300 L6.900 5.700 L1.100 5.700 Z M1.100 8.300 L6.900 8.300 L4 13.700 Z" fill="#b8b8b8"/></svg>
<svg class="a" style="left:1395px;top:63px" width="15" height="16" viewBox="0 0 15 16"><path d="M3.500 3v10.500M3.500 8h4M3.500 13h4" stroke="#8fb3ee" stroke-width="1"/><rect x="1" y="1" width="6.500" height="2.600" fill="#f5a73a" stroke="#7a4a10" stroke-width=".5"/><rect x="7.500" y="6.800" width="6" height="2.400" fill="#f2f2f2" stroke="#333" stroke-width=".5"/><rect x="7.500" y="11.800" width="6" height="2.400" fill="#f2f2f2" stroke="#333" stroke-width=".5"/></svg>
<div class="a" style="left:1393px;top:81px;width:26px;height:1px;background:rgba(255,255,255,0.09);"></div>
<div class="t " style="left:1434px;top:66px;">View</div>
<div class="t " style="left:1478px;top:66px;">Search</div>
<div class="mnu " style="left:1525px;top:61px;width:80px;height:20px;clip-path:inset(0 13px 0 0)"><div class="t w" style="left:8px;top:4px">All Scenes</div></div>
<div class="a" style="left:1528px;top:81px;width:64px;height:1px;background:rgba(255,255,255,0.09);"></div>
<svg class="a" style="left:1580px;top:58px" width="12" height="12" viewBox="0 0 12 12"><g fill="none"><path d="M0 0 L12 12 M4 0 L12 8 M8 0 L12 4" stroke="#2c2c2c" stroke-width="1.3"/><path d="M1.5 0 L12 10.5 M5.5 0 L12 6.5 M9.5 0 L12 2.5" stroke="#b4b4b4" stroke-width="1.1"/></g></svg>
<div class="a" style="left:1390px;top:95px;width:9px;height:1px;background:#3c3c3c;"></div>
<div class="a" style="left:1404px;top:104px;width:1px;height:47px;background:#3c3c3c;"></div>
<div class="a" style="left:1410px;top:155px;width:10px;height:1px;background:#3c3c3c;"></div>
<svg class="a" style="left:1382.0px;top:90.5px" width="9" height="9" viewBox="0 0 9 9"><circle cx="4.500" cy="4.500" r="4" fill="#e9e9e9" stroke="#111" stroke-width=".9"/><path d="M2 4.500h5" stroke="#111" stroke-width="1.300"/></svg>
<div class="a" style="left:1397px;top:85px;width:19px;height:19px;border-radius:10px;background:rgba(255,255,255,.28)"></div>
<svg class="a" style="left:1399px;top:87px" width="16" height="16" viewBox="0 0 16 16"><path d="M8.300 3.200c0-2.300 5.600-2.300 5.600 0v7c0 2.300-5.600 2.300-5.600 0z" fill="#3f78d4" stroke="#1a2f5a" stroke-width=".8"/><path d="M9.200 3.600c.5.500 1.300.7 2 .7v7.800c-.8 0-1.500-.3-2-.8z" fill="#d5e4fb"/><ellipse cx="11.100" cy="3.100" rx="2.500" ry="1.100" fill="#9fc0f2"/><circle cx="5.300" cy="11.300" r="3.800" fill="#bdbdbd" stroke="#222" stroke-width=".9"/><circle cx="4.300" cy="10.200" r="2" fill="#fff"/><circle cx="3" cy="3" r="1.700" fill="#f6ea6e" stroke="#8d8420" stroke-width=".7"/></svg>
<div class="t " style="left:1418px;top:90px;">Scene</div>
<svg class="a" style="left:1406.0px;top:110.5px" width="9" height="9" viewBox="0 0 9 9"><circle cx="4.500" cy="4.500" r="4" fill="#e9e9e9" stroke="#111" stroke-width=".9"/><path d="M2.200 4.500h4.600M4.500 2.200v4.600" stroke="#111" stroke-width="1.200"/></svg>
<svg class="a" style="left:1419px;top:107px" width="16" height="16" viewBox="0 0 15 15"><path d="M4 5l10 1.500-1.500 8L3 13z" fill="#d8d2b4" stroke="#444" stroke-width=".7"/><path d="M3 3.500l10 .8-.8 9L2.200 12z" fill="#e8e4d0" stroke="#444" stroke-width=".7"/><rect x="1" y="1" width="10.500" height="10.500" fill="#f6f6f6" stroke="#333" stroke-width=".8"/><rect x="2.200" y="2.200" width="8.100" height="8.100" fill="#c9d3e6"/><rect x="6.300" y="3" width="2.600" height="4.600" rx="1" fill="#3f76cf" stroke="#1d3f7a" stroke-width=".5"/><circle cx="5" cy="7.800" r="1.700" fill="#eee" stroke="#333" stroke-width=".6"/><circle cx="3.300" cy="3.300" r="1" fill="#f1de52"/></svg>
<div class="t " style="left:1438px;top:110px;">RenderLayers</div>
<div class="a" style="left:1517px;top:108px;width:1px;height:14px;background:#333;"></div>
<div class="a" style="left:1525px;top:105px;width:7px;height:20px;overflow:hidden"><div class="a" style="left:0;top:1px;width:19px;height:19px;border-radius:10px;background:rgba(255,255,255,.28)"></div><svg class="a" style="left:3px;top:2px" width="16" height="16" viewBox="0 0 15 15"><path d="M4 5l10 1.500-1.500 8L3 13z" fill="#d8d2b4" stroke="#444" stroke-width=".7"/><path d="M3 3.500l10 .8-.8 9L2.200 12z" fill="#e8e4d0" stroke="#444" stroke-width=".7"/><rect x="1" y="1" width="10.500" height="10.500" fill="#f6f6f6" stroke="#333" stroke-width=".8"/><rect x="2.200" y="2.200" width="8.100" height="8.100" fill="#c9d3e6"/><rect x="6.300" y="3" width="2.600" height="4.600" rx="1" fill="#3f76cf" stroke="#1d3f7a" stroke-width=".5"/><circle cx="5" cy="7.800" r="1.700" fill="#eee" stroke="#333" stroke-width=".6"/><circle cx="3.300" cy="3.300" r="1" fill="#f1de52"/></svg></div>
<div class="a" style="left:1418px;top:126px;width:18px;height:18px;border-radius:9px;background:rgba(255,255,255,.18)"></div>
<svg class="a" style="left:1420px;top:128px" width="14" height="14" viewBox="0 0 14 14"><circle cx="7" cy="7" r="6.200" fill="#5f7fa6" stroke="#1c2a3c" stroke-width=".9"/><path d="M3 3.500c1.500-1 3-.8 3.800.2.600 1-.3 1.800-1.200 2.300-.8.600-.5 1.800-1.600 1.700C2.800 7.500 2 5 3 3.500zM8 6.500c1.200-.6 3-.4 3.600.8.500 1.200-.5 3-1.700 3.700-1 .4-1.400-.9-1.600-1.900-.2-1-1.200-2-.3-2.600zM7.500 2c.8-.4 2-.2 2.600.5-.7.600-1.800.6-2.600-.5z" fill="#6f8656"/><ellipse cx="5" cy="4" rx="2.500" ry="1.700" fill="#fff" opacity=".35"/></svg>
<div class="t " style="left:1438px;top:130px;">World</div>
<svg class="a" style="left:1401.0px;top:150.5px" width="9" height="9" viewBox="0 0 9 9"><circle cx="4.500" cy="4.500" r="4" fill="#e9e9e9" stroke="#111" stroke-width=".9"/><path d="M2.200 4.500h4.600M4.500 2.200v4.600" stroke="#111" stroke-width="1.200"/></svg>
<div class="a" style="left:1418px;top:146px;width:18px;height:18px;border-radius:9px;background:#dd9a58"></div>
<svg class="a" style="left:1420px;top:148px" width="14" height="14" viewBox="0 0 14 14"><path d="M2 2.500h10L7 12z" fill="none" stroke="#3a2a10" stroke-width="2.3"/><path d="M2 2.500h10L7 12z" fill="none" stroke="#fff" stroke-width="1.1"/><circle cx="2" cy="2.500" r="1.500" fill="#fff" stroke="#3a2a10" stroke-width=".5"/><circle cx="12" cy="2.500" r="1.500" fill="#fff" stroke="#3a2a10" stroke-width=".5"/><circle cx="7" cy="12" r="1.500" fill="#fff" stroke="#3a2a10" stroke-width=".5"/></svg>
<div class="t w" style="left:1438px;top:150px;">Cube</div>
<div class="a" style="left:1474px;top:148px;width:1px;height:14px;background:#333;"></div>
<div class="a" style="left:1482px;top:145px;width:19px;height:19px;border-radius:10px;background:rgba(255,255,255,.28)"></div>
<svg class="a" style="left:1485px;top:148px" width="13" height="13" viewBox="0 0 14 14"><path d="M2 2.500h10L7 12z" fill="none" stroke="#5a5a5a" stroke-width="2.2"/><path d="M2 2.500h10L7 12z" fill="none" stroke="#f2f2f2" stroke-width="1.0"/><circle cx="2" cy="2.500" r="1.500" fill="#fff" stroke="#5a5a5a" stroke-width=".5"/><circle cx="12" cy="2.500" r="1.500" fill="#fff" stroke="#5a5a5a" stroke-width=".5"/><circle cx="7" cy="12" r="1.500" fill="#fff" stroke="#5a5a5a" stroke-width=".5"/></svg>
<svg class="a" style="left:1535px;top:148px" width="16" height="14" viewBox="0 0 16 14"><path d="M1 7c2.500-4 11.500-4 14 0-2.500 4-11.500 4-14 0z" fill="#f2f2f2" stroke="#222" stroke-width=".9"/><circle cx="8" cy="7" r="2.600" fill="#444"/><circle cx="7.200" cy="6.200" r=".9" fill="#fff"/></svg>
<svg class="a" style="left:1557px;top:147px" width="12" height="16" viewBox="0 0 12 16"><path d="M2 1.500v11l2.800-2.500 2 4.500 2-.9-2-4.400h3.700z" fill="#f4f4f4" stroke="#111" stroke-width=".9"/></svg>
<div class="a" style="left:1389px;top:175px;width:198px;height:11px;border-radius:5.5px;background:linear-gradient(#4e4e4e,#5e5e5e);box-shadow:0 0 0 1px rgba(40,40,40,.35)"></div>
<div class="a" style="left:1389px;top:175px;width:140px;height:11px;border-radius:5.5px;background:linear-gradient(#8c8c8c,#777);box-shadow:0 0 0 1px rgba(40,40,40,.5)"></div>
<svg class="a" style="left:1383px;top:178px" width="12" height="12" viewBox="0 0 12 12"><g fill="none"><path d="M0 0 L12 12 M0 4 L8 12 M0 8 L4 12" stroke="#2c2c2c" stroke-width="1.3"/><path d="M0 1.5 L10.5 12 M0 5.5 L6.5 12 M0 9.5 L2.5 12" stroke="#b4b4b4" stroke-width="1.1"/></g></svg>
<div class="mnu " style="left:1391px;top:195px;width:30px;height:20px;"></div>
<svg class="a" style="left:1410px;top:198px" width="8" height="14" viewBox="0 0 8 14"><path d="M4 0.300 L6.900 5.700 L1.100 5.700 Z M1.100 8.300 L6.900 8.300 L4 13.700 Z" fill="#b8b8b8"/></svg>
<svg class="a" style="left:1395px;top:198px" width="15" height="14" viewBox="0 0 15 14"><rect x=".8" y=".8" width="13.400" height="5" rx="2.500" fill="#555" stroke="#1a1a1a" stroke-width=".9"/><rect x="8" y="1.500" width="5.600" height="3.600" rx="1.800" fill="#eee"/><rect x=".8" y="8.200" width="13.400" height="5" rx="2.500" fill="#f2f2f2" stroke="#1a1a1a" stroke-width=".9"/><path d="M2.200 10.700l2-1.600v3.200zM12.800 10.700l-2-1.600v3.200z" fill="#222"/></svg>
<div class="a" style="left:1393px;top:215px;width:26px;height:1px;background:rgba(255,255,255,0.09);"></div>
<svg class="a" style="left:1574px;top:148px" width="16" height="14" viewBox="0 0 16 14"><rect x="3" y=".8" width="4.500" height="3" fill="#e8e8e8" stroke="#111" stroke-width=".8"/><rect x="1" y="2.800" width="14" height="10.400" rx="1" fill="#1c1c1c" stroke="#111" stroke-width=".9"/><rect x="1.500" y="3.300" width="13" height="3.400" fill="#f4f4f4"/><circle cx="9.300" cy="8.600" r="3.500" fill="#8a8a8a" stroke="#111" stroke-width=".8"/><circle cx="9.300" cy="8.600" r="2.200" fill="#3a2226"/><circle cx="10" cy="9.200" r="1" fill="#a03a3a"/><circle cx="8.500" cy="7.700" r=".7" fill="#ddd"/><rect x="3" y="4.300" width="1.600" height="1.300" fill="#e02020"/></svg>
<div class="mnu rl" style="left:1429px;top:195px;width:21px;height:20px;background:linear-gradient(#6690d2,#466eb2)"><svg class="a" style="left:1px;top:2px" width="16" height="14" viewBox="0 0 16 14"><rect x="3" y=".8" width="4.500" height="3" fill="#e8e8e8" stroke="#111" stroke-width=".8"/><rect x="1" y="2.800" width="14" height="10.400" rx="1" fill="#1c1c1c" stroke="#111" stroke-width=".9"/><rect x="1.500" y="3.300" width="13" height="3.400" fill="#f4f4f4"/><circle cx="9.300" cy="8.600" r="3.500" fill="#8a8a8a" stroke="#111" stroke-width=".8"/><circle cx="9.300" cy="8.600" r="2.200" fill="#3a2226"/><circle cx="10" cy="9.200" r="1" fill="#a03a3a"/><circle cx="8.500" cy="7.700" r=".7" fill="#ddd"/><rect x="3" y="4.300" width="1.600" height="1.300" fill="#e02020"/></svg></div>
<div class="mnu rn" style="left:1448px;top:195px;width:21px;height:20px;background:linear-gradient(#555,#373737)"><svg class="a" style="left:2px;top:1px" width="15" height="15" viewBox="0 0 15 15"><path d="M4 5l10 1.500-1.500 8L3 13z" fill="#d8d2b4" stroke="#444" stroke-width=".7"/><path d="M3 3.500l10 .8-.8 9L2.200 12z" fill="#e8e4d0" stroke="#444" stroke-width=".7"/><rect x="1" y="1" width="10.500" height="10.500" fill="#f6f6f6" stroke="#333" stroke-width=".8"/><rect x="2.200" y="2.200" width="8.100" height="8.100" fill="#c9d3e6"/><rect x="6.300" y="3" width="2.600" height="4.600" rx="1" fill="#3f76cf" stroke="#1d3f7a" stroke-width=".5"/><circle cx="5" cy="7.800" r="1.700" fill="#eee" stroke="#333" stroke-width=".6"/><circle cx="3.300" cy="3.300" r="1" fill="#f1de52"/></svg></div>
<div class="mnu rn" style="left:1468px;top:195px;width:21px;height:20px;background:linear-gradient(#555,#373737)"><svg class="a" style="left:1px;top:1px" width="16" height="16" viewBox="0 0 16 16"><path d="M8.300 3.200c0-2.300 5.600-2.300 5.600 0v7c0 2.300-5.600 2.300-5.600 0z" fill="#3f78d4" stroke="#1a2f5a" stroke-width=".8"/><path d="M9.200 3.600c.5.500 1.300.7 2 .7v7.800c-.8 0-1.500-.3-2-.8z" fill="#d5e4fb"/><ellipse cx="11.100" cy="3.100" rx="2.500" ry="1.100" fill="#9fc0f2"/><circle cx="5.300" cy="11.300" r="3.800" fill="#bdbdbd" stroke="#222" stroke-width=".9"/><circle cx="4.300" cy="10.200" r="2" fill="#fff"/><circle cx="3" cy="3" r="1.700" fill="#f6ea6e" stroke="#8d8420" stroke-width=".7"/></svg></div>
<div class="mnu rn" style="left:1488px;top:195px;width:21px;height:20px;background:linear-gradient(#555,#373737)"><svg class="a" style="left:2px;top:2px" width="14" height="14" viewBox="0 0 14 14"><circle cx="7" cy="7" r="6.200" fill="#5f7fa6" stroke="#1c2a3c" stroke-width=".9"/><path d="M3 3.500c1.500-1 3-.8 3.800.2.600 1-.3 1.800-1.200 2.300-.8.600-.5 1.800-1.600 1.700C2.800 7.500 2 5 3 3.500zM8 6.500c1.200-.6 3-.4 3.600.8.500 1.200-.5 3-1.700 3.700-1 .4-1.400-.9-1.600-1.900-.2-1-1.200-2-.3-2.600zM7.500 2c.8-.4 2-.2 2.600.5-.7.600-1.800.6-2.600-.5z" fill="#6f8656"/><ellipse cx="5" cy="4" rx="2.500" ry="1.700" fill="#fff" opacity=".35"/></svg></div>
<div class="mnu rn" style="left:1508px;top:195px;width:21px;height:20px;background:linear-gradient(#555,#373737)"><svg class="a" style="left:2px;top:1px" width="15" height="15" viewBox="0 0 15 15"><path d="M7.500 1L14 3.800V11L7.500 14.200 1 11V3.800z" fill="#c9985c" stroke="#3a2408" stroke-width=".9"/><path d="M7.500 1L14 3.800 7.500 6.800 1 3.800z" fill="#e7c596"/><path d="M7.500 6.800L14 3.800V11L7.500 14.200z" fill="#a8753a"/><path d="M1.800 4.600L7 7v6.200" fill="none" stroke="#fff" stroke-width=".8" opacity=".8"/></svg></div>
<div class="mnu rn" style="left:1528px;top:195px;width:21px;height:20px;background:linear-gradient(#555,#373737)"><svg class="a" style="left:1px;top:2px" width="16" height="14" viewBox="0 0 16 14" fill="none"><g stroke="#555" stroke-width="3.400"><rect x="1.500" y="5" width="8" height="5" rx="2.500" transform="rotate(-30 5.500 7.500)"/><rect x="6.500" y="4" width="8" height="5" rx="2.500" transform="rotate(-30 10.500 6.500)"/></g><g stroke="#d0d0d0" stroke-width="1.600"><rect x="1.500" y="5" width="8" height="5" rx="2.500" transform="rotate(-30 5.500 7.500)"/><rect x="6.500" y="4" width="8" height="5" rx="2.500" transform="rotate(-30 10.500 6.500)"/></g></svg></div>
<div class="mnu rn" style="left:1548px;top:195px;width:21px;height:20px;background:linear-gradient(#555,#373737)"><svg class="a" style="left:2px;top:2px" width="15" height="15" viewBox="0 0 15 15"><path d="M2 13.500l6-6.500a3.500 3.500 0 0 1 4.500-4.500L10.500 4.500l1 1.500 2.500-1.500A3.500 3.500 0 0 1 9.500 8.500L3.500 15z" fill="#5f8fd6" stroke="#1f3a6a" stroke-width=".8" transform="translate(0 -1)"/></svg></div>
<div class="mnu rn" style="left:1568px;top:195px;width:24px;height:20px;background:linear-gradient(#555,#373737)"><svg class="a" style="left:4px;top:3px" width="14" height="14" viewBox="0 0 14 14"><path d="M2 2.500h10L7 12z" fill="none" stroke="#444" stroke-width="2.0"/><path d="M2 2.500h10L7 12z" fill="none" stroke="#c8c8c8" stroke-width="0.8"/><circle cx="2" cy="2.500" r="1.500" fill="#fff" stroke="#444" stroke-width=".5"/><circle cx="12" cy="2.500" r="1.500" fill="#fff" stroke="#444" stroke-width=".5"/><circle cx="7" cy="12" r="1.500" fill="#fff" stroke="#444" stroke-width=".5"/></svg></div>
<div class="a" style="left:1433px;top:215px;width:159px;height:1px;background:rgba(255,255,255,0.09);"></div>
<svg class="a" style="left:1580px;top:192px" width="12" height="12" viewBox="0 0 12 12"><g fill="none"><path d="M0 0 L12 12 M4 0 L12 8 M8 0 L12 4" stroke="#2c2c2c" stroke-width="1.3"/><path d="M1.5 0 L12 10.5 M5.5 0 L12 6.5 M9.5 0 L12 2.5" stroke="#b4b4b4" stroke-width="1.1"/></g></svg>
<svg class="a" style="left:1392px;top:228px" width="16" height="16" viewBox="0 0 16 16"><g transform="translate(0.600 -0.600) rotate(45 8 8)" fill="#ececec" stroke="#1c1c1c" stroke-width=".9" stroke-linejoin="round"><path d="M8 17.500L6.800 10.500h2.400z" fill="#d8d8d8"/><rect x="3" y="8" width="10" height="2.800" rx=".8"/><path d="M5.600 8L6.300 3h3.400l.7 5z"/><rect x="4" y=".2" width="8" height="3" rx="1.100"/></g></svg>
<svg class="a" style="left:1415px;top:229px" width="16" height="16" viewBox="0 0 16 16"><path d="M8.300 3.200c0-2.300 5.600-2.300 5.600 0v7c0 2.300-5.600 2.300-5.600 0z" fill="#3f78d4" stroke="#1a2f5a" stroke-width=".8"/><path d="M9.200 3.600c.5.500 1.300.7 2 .7v7.800c-.8 0-1.500-.3-2-.8z" fill="#d5e4fb"/><ellipse cx="11.100" cy="3.100" rx="2.500" ry="1.100" fill="#9fc0f2"/><circle cx="5.300" cy="11.300" r="3.800" fill="#bdbdbd" stroke="#222" stroke-width=".9"/><circle cx="4.300" cy="10.200" r="2" fill="#fff"/><circle cx="3" cy="3" r="1.700" fill="#f6ea6e" stroke="#8d8420" stroke-width=".7"/></svg>
<div class="t " style="left:1434px;top:231px;">Scene</div>
<div class="a" style="left:1387px;top:253px;width:184px;height:1px;background:#5a5a5a;"></div>
<div class="a" style="left:1387px;top:254px;width:184px;height:1px;background:rgba(255,255,255,.06);"></div>
<svg class="a" style="left:1394px;top:262px" width="10" height="9" viewBox="0 0 10 9"><path d="M.5 .5h9L5 8.500z" fill="#1a1a1a"/></svg>
<div class="t pt" style="left:1407px;top:259px;">Render</div>
<svg class="a" style="left:1554px;top:265px" width="11" height="5" viewBox="0 0 11 5"><rect x="0" y="0" width="1.200" height="1.200" fill="#3a3a3a"/><rect x="1" y="1" width="1" height="1" fill="#9a9a9a"/><rect x="0" y="3" width="1.200" height="1.200" fill="#3a3a3a"/><rect x="1" y="4" width="1" height="1" fill="#9a9a9a"/><rect x="3" y="0" width="1.200" height="1.200" fill="#3a3a3a"/><rect x="4" y="1" width="1" height="1" fill="#9a9a9a"/><rect x="3" y="3" width="1.200" height="1.200" fill="#3a3a3a"/><rect x="4" y="4" width="1" height="1" fill="#9a9a9a"/><rect x="6" y="0" width="1.200" height="1.200" fill="#3a3a3a"/><rect x="7" y="1" width="1" height="1" fill="#9a9a9a"/><rect x="6" y="3" width="1.200" height="1.200" fill="#3a3a3a"/><rect x="7" y="4" width="1" height="1" fill="#9a9a9a"/><rect x="9" y="0" width="1.200" height="1.200" fill="#3a3a3a"/><rect x="10" y="1" width="1" height="1" fill="#9a9a9a"/><rect x="9" y="3" width="1.200" height="1.200" fill="#3a3a3a"/><rect x="10" y="4" width="1" height="1" fill="#9a9a9a"/></svg>
<div class="btn rl" style="left:1390px;top:286px;width:60px;height:20px;"><div class="t" style="left:18px;top:4px">Render</div><svg class="a" style="left:2px;top:2px" width="16" height="14" viewBox="0 0 16 14"><rect x="3" y=".8" width="4.500" height="3" fill="#e8e8e8" stroke="#111" stroke-width=".8"/><rect x="1" y="2.800" width="14" height="10.400" rx="1" fill="#1c1c1c" stroke="#111" stroke-width=".9"/><rect x="1.500" y="3.300" width="13" height="3.400" fill="#f4f4f4"/><circle cx="9.300" cy="8.600" r="3.500" fill="#8a8a8a" stroke="#111" stroke-width=".8"/><circle cx="9.300" cy="8.600" r="2.200" fill="#3a2226"/><circle cx="10" cy="9.200" r="1" fill="#a03a3a"/><circle cx="8.500" cy="7.700" r=".7" fill="#ddd"/><rect x="3" y="4.300" width="1.600" height="1.300" fill="#e02020"/></svg><svg class="a" style="left:12px;top:0px" width="7" height="7" viewBox="0 0 7 7"><path d="M3.500 0l1 2.500L7 3.500l-2.500 1-1 2.500-1-2.500L0 3.500l2.500-1z" fill="#ffe36a"/></svg></div>
<div class="btn rn" style="left:1449px;top:286px;width:59px;height:20px;overflow:hidden"><div class="t" style="left:17px;top:4px">Animati</div><svg class="a" style="left:3px;top:1px" width="16" height="16" viewBox="0 0 16 16"><rect x="1.500" y="7" width="13" height="8" fill="#f0f0f0" stroke="#222" stroke-width=".9"/><rect x="3" y="10" width="10" height="1" fill="#888"/><rect x="3" y="12.500" width="10" height="1" fill="#888"/><path d="M1 4.500L13.500 .8l.8 2.700L1.800 7.200z" fill="#333" stroke="#111" stroke-width=".6"/><path d="M3.500 3.800l1.500 2.500M7 2.800l1.500 2.500M10.500 1.800l1.500 2.500" stroke="#fff" stroke-width="1.300"/></svg></div>
<div class="btn rr" style="left:1507px;top:286px;width:60px;height:20px;"><div class="t" style="left:22px;top:4px">Audio</div><svg class="a" style="left:3px;top:1px" width="17" height="16" viewBox="0 0 17 16"><path d="M1.500 5.500h3L8.500 2v12L4.500 10.500h-3z" fill="#efefef" stroke="#222" stroke-width=".9"/><path d="M10.500 5c1.300 1.500 1.300 4.500 0 6M12.800 3c2.500 2.800 2.500 7.200 0 10" fill="none" stroke="#6c9ae0" stroke-width="1.300"/></svg></div>
<div class="a" style="left:1393px;top:306px;width:171px;height:1px;background:rgba(255,255,255,0.09);"></div>
<div class="t " style="left:1397px;top:316px;">Display:</div>
<div class="mnu rl" style="left:1453px;top:311px;width:94px;height:20px;"><div class="t w" style="left:8px;top:4px">Image Editor</div><svg class="a" style="left:82.5px;top:2.0px" width="8" height="14" viewBox="0 0 8 14"><path d="M4 0.300 L6.900 5.700 L1.100 5.700 Z M1.100 8.300 L6.900 8.300 L4 13.700 Z" fill="#b8b8b8"/></svg></div>
<div class="btn rr" style="left:1546px;top:311px;width:21px;height:20px;"><svg class="a" style="left:3px;top:1px" width="14" height="16" viewBox="0 0 14 16"><path d="M2 8V4.500a2.600 2.600 0 0 1 5.200 0V6" fill="none" stroke="#333" stroke-width="2.400"/><path d="M2 8V4.500a2.600 2.600 0 0 1 5.200 0V6" fill="none" stroke="#eee" stroke-width="1.200"/><rect x="3.500" y="7.500" width="9" height="6.500" fill="#f0f0f0" stroke="#333" stroke-width=".9"/><rect x="5" y="9.500" width="6" height="1" fill="#999"/><rect x="5" y="11.500" width="6" height="1" fill="#999"/></svg></div>
<div class="a" style="left:1456px;top:331px;width:108px;height:1px;background:rgba(255,255,255,0.09);"></div>
<div class="t " style="left:1397px;top:341px;">Feature S</div>
<div class="mnu " style="left:1453px;top:336px;width:114px;height:20px;"><div class="t w" style="left:8px;top:4px">Supported</div><svg class="a" style="left:102.5px;top:2.0px" width="8" height="14" viewBox="0 0 8 14"><path d="M4 0.300 L6.900 5.700 L1.100 5.700 Z M1.100 8.300 L6.900 8.300 L4 13.700 Z" fill="#b8b8b8"/></svg></div>
<div class="a" style="left:1456px;top:356px;width:108px;height:1px;background:rgba(255,255,255,0.09);"></div>
<div class="t " style="left:1397px;top:366px;">Device:</div>
<div class="mnu " style="left:1453px;top:361px;width:114px;height:20px;"><div class="t w" style="left:8px;top:4px">CPU</div><svg class="a" style="left:102.5px;top:2.0px" width="8" height="14" viewBox="0 0 8 14"><path d="M4 0.300 L6.900 5.700 L1.100 5.700 Z M1.100 8.300 L6.900 8.300 L4 13.700 Z" fill="#b8b8b8"/></svg></div>
<div class="a" style="left:1456px;top:381px;width:108px;height:1px;background:rgba(255,255,255,0.09);"></div>
<div class="chk" style="left:1393px;top:390px;"></div>
<div class="t " style="left:1415px;top:391px;letter-spacing:-0.78px">Open Shading Language</div>
<div class="a" style="left:1387px;top:413px;width:184px;height:1px;background:#5a5a5a;"></div>
<div class="a" style="left:1387px;top:414px;width:184px;height:1px;background:rgba(255,255,255,.06);"></div>
<svg class="a" style="left:1394px;top:422px" width="10" height="9" viewBox="0 0 10 9"><path d="M.5 .5h9L5 8.500z" fill="#1a1a1a"/></svg>
<div class="t pt" style="left:1407px;top:419px;">Dimensions</div>
<svg class="a" style="left:1554px;top:425px" width="11" height="5" viewBox="0 0 11 5"><rect x="0" y="0" width="1.200" height="1.200" fill="#3a3a3a"/><rect x="1" y="1" width="1" height="1" fill="#9a9a9a"/><rect x="0" y="3" width="1.200" height="1.200" fill="#3a3a3a"/><rect x="1" y="4" width="1" height="1" fill="#9a9a9a"/><rect x="3" y="0" width="1.200" height="1.200" fill="#3a3a3a"/><rect x="4" y="1" width="1" height="1" fill="#9a9a9a"/><rect x="3" y="3" width="1.200" height="1.200" fill="#3a3a3a"/><rect x="4" y="4" width="1" height="1" fill="#9a9a9a"/><rect x="6" y="0" width="1.200" height="1.200" fill="#3a3a3a"/><rect x="7" y="1" width="1" height="1" fill="#9a9a9a"/><rect x="6" y="3" width="1.200" height="1.200" fill="#3a3a3a"/><rect x="7" y="4" width="1" height="1" fill="#9a9a9a"/><rect x="9" y="0" width="1.200" height="1.200" fill="#3a3a3a"/><rect x="10" y="1" width="1" height="1" fill="#9a9a9a"/><rect x="9" y="3" width="1.200" height="1.200" fill="#3a3a3a"/><rect x="10" y="4" width="1" height="1" fill="#9a9a9a"/></svg>
<div class="mnu rl" style="left:1390px;top:446px;width:137px;height:20px;"><div class="t w" style="left:7px;top:4px">Render Presets</div><svg class="a" style="left:125.5px;top:2.0px" width="8" height="14" viewBox="0 0 8 14"><path d="M4 0.300 L6.900 5.700 L1.100 5.700 Z M1.100 8.300 L6.900 8.300 L4 13.700 Z" fill="#b8b8b8"/></svg></div>
<div class="btn rn" style="left:1526px;top:446px;width:21px;height:20px;"><svg class="a" style="left:2.5px;top:2px" width="14" height="14" viewBox="0 0 14 14"><path d="M5.800 1.500h2.400v4.300h4.300v2.400H8.200v4.300H5.800V8.200H1.500V5.800h4.300z" fill="#fff" stroke="#222" stroke-width=".9"/></svg></div>
<div class="btn rr" style="left:1546px;top:446px;width:21px;height:20px;"><svg class="a" style="left:3px;top:6px" width="13" height="6" viewBox="0 0 13 6"><rect x=".5" y=".5" width="12" height="4" rx="1" fill="#fff" stroke="#222" stroke-width="1"/></svg></div>
<div class="a" style="left:1393px;top:466px;width:171px;height:1px;background:rgba(255,255,255,0.09);"></div>
<div class="t " style="left:1397px;top:476px;">Resolution:</div>
<div class="t " style="left:1490px;top:476px;">Frame Range:</div>
<div class="num rt" style="left:1390px;top:491px;width:84px;height:20px;border-radius:9px 9px 0 0"><svg class="a" style="left:5px;top:5px" width="5" height="8" viewBox="0 0 5 8"><path d="M4.500 .5v7L.5 4z" fill="#757575"/></svg><svg class="a" style="left:72px;top:5px" width="5" height="8" viewBox="0 0 5 8"><path d="M.5 .5v7L4.500 4z" fill="#757575"/></svg><div class="t" style="left:16px;top:4px">:</div><div class="t" style="right:16px;top:4px">1920 px</div></div>
<div class="num rn" style="left:1390px;top:510px;width:84px;height:20px;border-radius:0"><svg class="a" style="left:5px;top:5px" width="5" height="8" viewBox="0 0 5 8"><path d="M4.500 .5v7L.5 4z" fill="#757575"/></svg><svg class="a" style="left:72px;top:5px" width="5" height="8" viewBox="0 0 5 8"><path d="M.5 .5v7L4.500 4z" fill="#757575"/></svg><div class="t" style="left:14px;top:4px">Y:</div><div class="t" style="right:16px;top:4px">1080 px</div></div>
<div class="num rb" style="left:1390px;top:529px;width:84px;height:21px;border-radius:0 0 9px 9px"><div class="a" style="left:0;top:0;width:44px;height:19px;background:linear-gradient(#6e6e6e,#808080);border-radius:9px 0 0 9px"></div></div>
<div class="t " style="left:1434px;top:534px;">50%</div>
<div class="a" style="left:1398px;top:550px;width:68px;height:1px;background:rgba(255,255,255,0.09);"></div>
<div class="num " style="left:1482px;top:491px;width:85px;height:20px;border-radius:9px 9px 0 0"><svg class="a" style="left:5px;top:5px" width="5" height="8" viewBox="0 0 5 8"><path d="M4.500 .5v7L.5 4z" fill="#757575"/></svg><svg class="a" style="left:73px;top:5px" width="5" height="8" viewBox="0 0 5 8"><path d="M.5 .5v7L4.500 4z" fill="#757575"/></svg><div class="t" style="left:16px;top:4px">Start Fr:</div><div class="t" style="right:17px;top:4px">1</div></div>
<div class="num " style="left:1482px;top:510px;width:85px;height:20px;border-radius:0"><svg class="a" style="left:5px;top:5px" width="5" height="8" viewBox="0 0 5 8"><path d="M4.500 .5v7L.5 4z" fill="#757575"/></svg><svg class="a" style="left:73px;top:5px" width="5" height="8" viewBox="0 0 5 8"><path d="M.5 .5v7L4.500 4z" fill="#757575"/></svg><div class="t" style="left:16px;top:4px">End F:</div><div class="t" style="right:16px;top:4px">250</div></div>
<div class="num " style="left:1482px;top:529px;width:85px;height:21px;border-radius:0 0 9px 9px"><svg class="a" style="left:5px;top:5px" width="5" height="8" viewBox="0 0 5 8"><path d="M4.500 .5v7L.5 4z" fill="#757575"/></svg><svg class="a" style="left:73px;top:5px" width="5" height="8" viewBox="0 0 5 8"><path d="M.5 .5v7L4.500 4z" fill="#757575"/></svg><div class="t" style="left:16px;top:5px">Frame S:</div><div class="t" style="right:16px;top:5px">1</div></div>
<div class="a" style="left:1490px;top:550px;width:69px;height:1px;background:rgba(255,255,255,0.09);"></div>
<div class="t " style="left:1397px;top:556px;">Aspect Ratio:</div>
<div class="t " style="left:1490px;top:556px;">Frame Rate:</div>
<div class="num " style="left:1390px;top:571px;width:84px;height:20px;border-radius:9px 9px 0 0"><svg class="a" style="left:5px;top:5px" width="5" height="8" viewBox="0 0 5 8"><path d="M4.500 .5v7L.5 4z" fill="#757575"/></svg><svg class="a" style="left:72px;top:5px" width="5" height="8" viewBox="0 0 5 8"><path d="M.5 .5v7L4.500 4z" fill="#757575"/></svg><div class="t" style="left:14px;top:4px">X:</div><div class="t" style="right:16px;top:4px">1.000</div></div>
<div class="num " style="left:1390px;top:590px;width:84px;height:20px;border-radius:0 0 9px 9px"><svg class="a" style="left:5px;top:5px" width="5" height="8" viewBox="0 0 5 8"><path d="M4.500 .5v7L.5 4z" fill="#757575"/></svg><svg class="a" style="left:72px;top:5px" width="5" height="8" viewBox="0 0 5 8"><path d="M.5 .5v7L4.500 4z" fill="#757575"/></svg><div class="t" style="left:14px;top:4px">Y:</div><div class="t" style="right:16px;top:4px">1.000</div></div>
<div class="a" style="left:1398px;top:610px;width:68px;height:1px;background:rgba(255,255,255,0.09);"></div>
<div class="mnu " style="left:1482px;top:571px;width:85px;height:20px;"><div class="t w" style="left:7px;top:4px">24 fps</div><svg class="a" style="left:73.5px;top:2.0px" width="8" height="14" viewBox="0 0 8 14"><path d="M4 0.300 L6.900 5.700 L1.100 5.700 Z M1.100 8.300 L6.900 8.300 L4 13.700 Z" fill="#b8b8b8"/></svg></div>
<div class="a" style="left:1485px;top:591px;width:79px;height:1px;background:rgba(255,255,255,0.09);"></div>
<div class="t " style="left:1490px;top:596px;">Time Remapp</div>
<div class="num " style="left:1482px;top:611px;width:43px;height:19px;border-radius:9px 0 0 9px"><svg class="a" style="left:5px;top:4px" width="5" height="8" viewBox="0 0 5 8"><path d="M4.500 .5v7L.5 4z" fill="#757575"/></svg><svg class="a" style="left:31px;top:4px" width="5" height="8" viewBox="0 0 5 8"><path d="M.5 .5v7L4.500 4z" fill="#757575"/></svg><div class="t" style="left:0;width:41px;text-align:center;top:4px">1</div></div>
<div class="num " style="left:1524px;top:611px;width:43px;height:19px;border-radius:0 9px 9px 0"><svg class="a" style="left:5px;top:4px" width="5" height="8" viewBox="0 0 5 8"><path d="M4.500 .5v7L.5 4z" fill="#757575"/></svg><svg class="a" style="left:31px;top:4px" width="5" height="8" viewBox="0 0 5 8"><path d="M.5 .5v7L4.500 4z" fill="#757575"/></svg><div class="t" style="left:0;width:41px;text-align:center;top:4px">10</div></div>
<div class="a" style="left:1490px;top:630px;width:69px;height:1px;background:rgba(255,255,255,0.09);"></div>
<div class="chk" style="left:1393px;top:616px;"></div>
<div class="t " style="left:1416px;top:618px;">B</div>
<div class="chk" style="left:1439px;top:616px;opacity:.45;"></div>
<div class="t " style="left:1461px;top:618px;color:#555">Cr</div>
<div class="a" style="left:1387px;top:640px;width:184px;height:1px;background:#5a5a5a;"></div>
<div class="a" style="left:1387px;top:641px;width:184px;height:1px;background:rgba(255,255,255,.06);"></div>
<svg class="a" style="left:1395px;top:648px" width="9" height="10" viewBox="0 0 9 10"><path d="M.5 .5v9L8.500 5z" fill="#1a1a1a"/></svg>
<div class="t pt" style="left:1407px;top:646px;">Metadata</div>
<svg class="a" style="left:1554px;top:652px" width="11" height="5" viewBox="0 0 11 5"><rect x="0" y="0" width="1.200" height="1.200" fill="#3a3a3a"/><rect x="1" y="1" width="1" height="1" fill="#9a9a9a"/><rect x="0" y="3" width="1.200" height="1.200" fill="#3a3a3a"/><rect x="1" y="4" width="1" height="1" fill="#9a9a9a"/><rect x="3" y="0" width="1.200" height="1.200" fill="#3a3a3a"/><rect x="4" y="1" width="1" height="1" fill="#9a9a9a"/><rect x="3" y="3" width="1.200" height="1.200" fill="#3a3a3a"/><rect x="4" y="4" width="1" height="1" fill="#9a9a9a"/><rect x="6" y="0" width="1.200" height="1.200" fill="#3a3a3a"/><rect x="7" y="1" width="1" height="1" fill="#9a9a9a"/><rect x="6" y="3" width="1.200" height="1.200" fill="#3a3a3a"/><rect x="7" y="4" width="1" height="1" fill="#9a9a9a"/><rect x="9" y="0" width="1.200" height="1.200" fill="#3a3a3a"/><rect x="10" y="1" width="1" height="1" fill="#9a9a9a"/><rect x="9" y="3" width="1.200" height="1.200" fill="#3a3a3a"/><rect x="10" y="4" width="1" height="1" fill="#9a9a9a"/></svg>
<div class="a" style="left:1387px;top:664px;width:184px;height:1px;background:#5a5a5a;"></div>
<div class="a" style="left:1387px;top:665px;width:184px;height:1px;background:rgba(255,255,255,.06);"></div>
<svg class="a" style="left:1394px;top:673px" width="10" height="9" viewBox="0 0 10 9"><path d="M.5 .5h9L5 8.500z" fill="#1a1a1a"/></svg>
<div class="t pt" style="left:1407px;top:670px;">Output</div>
<svg class="a" style="left:1554px;top:676px" width="11" height="5" viewBox="0 0 11 5"><rect x="0" y="0" width="1.200" height="1.200" fill="#3a3a3a"/><rect x="1" y="1" width="1" height="1" fill="#9a9a9a"/><rect x="0" y="3" width="1.200" height="1.200" fill="#3a3a3a"/><rect x="1" y="4" width="1" height="1" fill="#9a9a9a"/><rect x="3" y="0" width="1.200" height="1.200" fill="#3a3a3a"/><rect x="4" y="1" width="1" height="1" fill="#9a9a9a"/><rect x="3" y="3" width="1.200" height="1.200" fill="#3a3a3a"/><rect x="4" y="4" width="1" height="1" fill="#9a9a9a"/><rect x="6" y="0" width="1.200" height="1.200" fill="#3a3a3a"/><rect x="7" y="1" width="1" height="1" fill="#9a9a9a"/><rect x="6" y="3" width="1.200" height="1.200" fill="#3a3a3a"/><rect x="7" y="4" width="1" height="1" fill="#9a9a9a"/><rect x="9" y="0" width="1.200" height="1.200" fill="#3a3a3a"/><rect x="10" y="1" width="1" height="1" fill="#9a9a9a"/><rect x="9" y="3" width="1.200" height="1.200" fill="#3a3a3a"/><rect x="10" y="4" width="1" height="1" fill="#9a9a9a"/></svg>
<div class="btn rl" style="left:1390px;top:697px;width:157px;height:20px;background:linear-gradient(#999,#b2b2b2)"><div class="t" style="left:6px;top:4px">/tmp\</div></div>
<div class="btn rr" style="left:1546px;top:697px;width:21px;height:20px;"><svg class="a" style="left:2px;top:2px" width="16" height="14" viewBox="0 0 16 14"><path d="M1 3.500h5l1 1.500h7.500v8.500H1z" fill="#d9c98a" stroke="#4a4223" stroke-width=".9"/><path d="M4 1h8v6H4z" fill="#f4f4f4" stroke="#555" stroke-width=".7"/><path d="M1 6.500h13.500v7H1z" fill="#e6d89c" stroke="#4a4223" stroke-width=".9"/></svg></div>
<div class="a" style="left:1393px;top:717px;width:171px;height:1px;background:rgba(255,255,255,0.09);"></div>
<div class="chk" style="left:1393px;top:726px;"><svg class="a" style="left:0px;top:-3px" width="15" height="15" viewBox="0 0 14 14"><path d="M2.500 7.500l3 3.500L12 2" fill="none" stroke="#fff" stroke-width="2"/></svg></div>
<div class="t w" style="left:1415px;top:727px;">Overwrite</div>
<div class="chk" style="left:1485px;top:726px;"><svg class="a" style="left:0px;top:-3px" width="15" height="15" viewBox="0 0 14 14"><path d="M2.500 7.500l3 3.500L12 2" fill="none" stroke="#fff" stroke-width="2"/></svg></div>
<div class="t w" style="left:1507px;top:727px;">File Exte...</div>
<div class="chk" style="left:1393px;top:748px;"></div>
<div class="t " style="left:1415px;top:749px;">Placehol...</div>
<div class="chk" style="left:1485px;top:748px;"></div>
<div class="t " style="left:1507px;top:749px;">Cache Re...</div>
<div class="mnu " style="left:1390px;top:769px;width:84px;height:20px;"><div class="t w" style="left:23px;top:4px">PNG</div><svg class="a" style="left:72.5px;top:2.0px" width="8" height="14" viewBox="0 0 8 14"><path d="M4 0.300 L6.900 5.700 L1.100 5.700 Z M1.100 8.300 L6.900 8.300 L4 13.700 Z" fill="#b8b8b8"/></svg></div>
<svg class="a" style="left:1395px;top:771px" width="14.0" height="15" viewBox="0 0 14 15"><path d="M4 .6h9.400v13.800H.6V4z" fill="#f6f6f6" stroke="#222" stroke-width="1"/><path d="M5 2h7.300v6H1.700V5.500H5z" fill="#eaa6a2"/><rect x="1.700" y="8" width="10.600" height="5.300" fill="#8f90c6"/><rect x="1.700" y="7.600" width="10.600" height="1.300" fill="#1a1a1a"/><circle cx="8.700" cy="4.600" r="1.500" fill="#fff"/><path d="M.6 4L4 .6V4z" fill="#ddd" stroke="#222" stroke-width=".7"/></svg>
<div class="a" style="left:1393px;top:789px;width:78px;height:1px;background:rgba(255,255,255,0.09);"></div>
<div class="mnu rl" style="left:1482px;top:769px;width:29px;height:20px;background:linear-gradient(#555,#373737)"></div>
<div class="mnu rn" style="left:1510px;top:769px;width:29px;height:20px;background:linear-gradient(#555,#373737)"></div>
<div class="mnu rr" style="left:1538px;top:769px;width:29px;height:20px;background:linear-gradient(#6690d2,#466eb2)"></div>
<div class="t w" style="left:1487px;top:773px">BW</div><div class="t w" style="left:1513px;top:773px">RGB</div><div class="t w" style="left:1540px;top:773px">RGB</div>
<div class="a" style="left:1485px;top:789px;width:79px;height:1px;background:rgba(255,255,255,0.09);"></div>
<div class="t " style="left:1397px;top:798px;">Color Dep</div>
<div class="mnu rl" style="left:1454px;top:793px;width:57px;height:20px;background:linear-gradient(#6690d2,#466eb2)"></div>
<div class="mnu rr" style="left:1510px;top:793px;width:57px;height:20px;background:linear-gradient(#555,#373737)"></div>
<div class="t w" style="left:1478px;top:797px">8</div><div class="t w" style="left:1532px;top:797px">16</div>
<div class="num " style="left:1390px;top:814px;width:177px;height:20px;"><div class="a" style="left:0;top:0;width:34px;height:18px;background:linear-gradient(#6e6e6e,#808080);border-radius:9px 0 0 9px"></div><div class="t" style="left:14px;top:4px">Compression:</div><div class="t" style="right:15px;top:4px">15%</div></div>
<div class="a" style="left:1398px;top:834px;width:161px;height:1px;background:rgba(255,255,255,0.09);"></div>
<div class="a" style="left:1387px;top:842px;width:184px;height:1px;background:#5a5a5a;"></div>
<div class="a" style="left:1387px;top:843px;width:184px;height:1px;background:rgba(255,255,255,.06);"></div>
<div class="a" style="left:1383px;top:843px;width:209px;height:9px;overflow:hidden"><div class="chk" style="left:24px;top:5px"></div><div class="t pt" style="left:45px;top:6px">Freestyle</div></div>
<svg class="a" style="left:1383px;top:840px" width="12" height="12" viewBox="0 0 12 12"><g fill="none"><path d="M0 0 L12 12 M0 4 L8 12 M0 8 L4 12" stroke="#2c2c2c" stroke-width="1.3"/><path d="M0 1.5 L10.5 12 M0 5.5 L6.5 12 M0 9.5 L2.5 12" stroke="#b4b4b4" stroke-width="1.1"/></g></svg>
<div class="a" style="left:1576px;top:224px;width:11px;height:624px;border-radius:5.5px;background:linear-gradient(90deg,#4e4e4e,#5e5e5e);box-shadow:0 0 0 1px rgba(40,40,40,.35)"></div>
<div class="a" style="left:1576px;top:224px;width:11px;height:437px;border-radius:5.5px;background:linear-gradient(90deg,#8c8c8c,#777);box-shadow:0 0 0 1px rgba(40,40,40,.5)"></div>
<div class="a" style="left:1201px;top:778px;width:380px;height:34px;border-radius:5px;background:rgba(24,24,24,.93);box-shadow:0 2px 6px rgba(0,0,0,.45)"></div>
<div class="t w" style="left:1214px;top:790px;letter-spacing:-0.52px">Face select - Shift-Click for multiple modes, Ctrl-Click expands selection</div>
<div class="a" style="left:1592px;top:0px;width:1px;height:853px;background:#1767b0;"></div>
<div class="a" style="left:1593px;top:0px;width:7px;height:84px;background:#1a1712;"></div>
<div class="a" style="left:1593px;top:84px;width:7px;height:733px;background:linear-gradient(90deg,#f2f2f2,#dcdcdc);"></div>
<div class="a" style="left:1593px;top:659px;width:5px;height:122px;background:#a9a9a9;"></div>
<div class="a" style="left:1594px;top:94px;width:2px;height:2px;background:#333;"></div>
<div class="a" style="left:1594px;top:798px;width:2px;height:2px;background:#333;"></div>
<div class="a" style="left:1593px;top:817px;width:7px;height:43px;background:#1a1610;"></div>
<div class="a" style="left:0px;top:853px;width:1600px;height:7px;background:#1a1610;"></div>
<div class="a" style="left:0px;top:843px;width:7px;height:17px;background:#15120e;"></div>
<div class="a" style="left:3px;top:853px;width:205px;height:3px;border:1px solid #565656;border-top:0;border-radius:0 0 3px 3px"></div>
<div class="a" style="left:211px;top:853px;width:205px;height:3px;border:1px solid #565656;border-top:0;border-radius:0 0 3px 3px"></div>
<div class="a" style="left:420px;top:853px;width:206px;height:3px;border:1px solid #565656;border-top:0;border-radius:0 0 3px 3px"></div>
<div class="a" style="left:3px;top:843px;width:1px;height:10px;background:#565656;"></div>
<div class="a" style="left:7px;top:0px;width:1px;height:853px;background:#1767b0;"></div>
<!--CONTENT-->
</div></body></html>
